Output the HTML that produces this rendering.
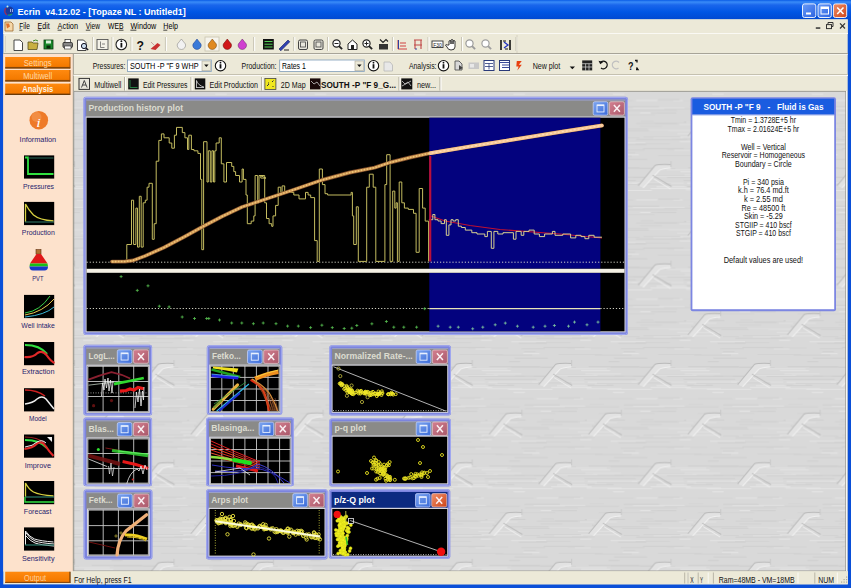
<!DOCTYPE html><html><head><meta charset="utf-8"><style>html,body{margin:0;padding:0;width:851px;height:588px;overflow:hidden;background:#0a4fd8}svg{display:block;font-family:"Liberation Sans",sans-serif}</style></head><body><svg width="851" height="588" viewBox="0 0 851 588"><rect x="0" y="0" width="851" height="588" fill="#0a4fd8"/>
<defs><linearGradient id="tg" x1="0" y1="0" x2="0" y2="1"><stop offset="0" stop-color="#0a5ce6"/><stop offset="0.1" stop-color="#3a8cf8"/><stop offset="0.25" stop-color="#1a66ec"/><stop offset="0.6" stop-color="#0056e4"/><stop offset="1" stop-color="#0148d0"/></linearGradient><linearGradient id="btn" x1="0" y1="0" x2="1" y2="1"><stop offset="0" stop-color="#6a9cf8"/><stop offset="1" stop-color="#2b62e0"/></linearGradient><linearGradient id="cls" x1="0" y1="0" x2="1" y2="1"><stop offset="0" stop-color="#f0906a"/><stop offset="1" stop-color="#cc4418"/></linearGradient><linearGradient id="sb" x1="0" y1="0" x2="1" y2="1"><stop offset="0" stop-color="#7ea6f0"/><stop offset="1" stop-color="#3a6ad8"/></linearGradient><linearGradient id="sc" x1="0" y1="0" x2="1" y2="1"><stop offset="0" stop-color="#d48090"/><stop offset="1" stop-color="#a8586a"/></linearGradient><linearGradient id="ob" x1="0" y1="0" x2="0" y2="1"><stop offset="0" stop-color="#ff8a10"/><stop offset="0.8" stop-color="#f47a00"/><stop offset="1" stop-color="#c05c00"/></linearGradient><pattern id="bg" patternUnits="userSpaceOnUse" x="41.2" y="62.8" width="99.4" height="99.4"><rect width="99.4" height="99.4" fill="#d9d9d9"/><path d="M2.5,63.6h21.8" stroke="#d2d2d2" stroke-width="0.9"/><path d="M10.2,13.9h45.0" stroke="#cecece" stroke-width="0.9"/><path d="M3.2,58.7h12.7" stroke="#d2d2d2" stroke-width="0.9"/><path d="M2.6,50.2h17.9" stroke="#e6e6e6" stroke-width="0.9"/><path d="M58.6,21.9h48.5" stroke="#cecece" stroke-width="0.9"/><path d="M-40.8,21.9h48.5" stroke="#cecece" stroke-width="0.9"/><path d="M15.9,75.4h29.1" stroke="#e2e2e2" stroke-width="0.9"/><path d="M95.1,15.5h24.8" stroke="#cecece" stroke-width="0.9"/><path d="M-4.3,15.5h24.8" stroke="#cecece" stroke-width="0.9"/><path d="M35.7,37.8h25.2" stroke="#e2e2e2" stroke-width="0.9"/><path d="M72.5,80.2h34.8" stroke="#e6e6e6" stroke-width="0.9"/><path d="M-26.9,80.2h34.8" stroke="#e6e6e6" stroke-width="0.9"/><path d="M29.1,7.8h39.4" stroke="#e2e2e2" stroke-width="0.9"/><path d="M70.0,57.4h10.3" stroke="#d2d2d2" stroke-width="0.9"/><path d="M97.9,76.8h50.8" stroke="#cecece" stroke-width="0.9"/><path d="M-1.5,76.8h50.8" stroke="#cecece" stroke-width="0.9"/><path d="M45.1,37.8h49.7" stroke="#d2d2d2" stroke-width="0.9"/><path d="M20.8,36.8h21.3" stroke="#cecece" stroke-width="0.9"/><path d="M17.0,60.5h44.5" stroke="#d2d2d2" stroke-width="0.9"/><path d="M26.8,45.9h54.3" stroke="#d2d2d2" stroke-width="0.9"/><path d="M83.8,68.1h46.8" stroke="#d2d2d2" stroke-width="0.9"/><path d="M-15.6,68.1h46.8" stroke="#d2d2d2" stroke-width="0.9"/><path d="M80.0,81.7h28.1" stroke="#cecece" stroke-width="0.9"/><path d="M-19.4,81.7h28.1" stroke="#cecece" stroke-width="0.9"/><path d="M93.7,21.0h51.8" stroke="#e2e2e2" stroke-width="0.9"/><path d="M-5.7,21.0h51.8" stroke="#e2e2e2" stroke-width="0.9"/><path d="M49.6,21.1h52.2" stroke="#e6e6e6" stroke-width="0.9"/><path d="M-49.8,21.1h52.2" stroke="#e6e6e6" stroke-width="0.9"/><path d="M13.9,14.2h45.2" stroke="#e2e2e2" stroke-width="0.9"/><path d="M42.6,74.3h37.2" stroke="#e2e2e2" stroke-width="0.9"/><path d="M99.2,21.8h33.5" stroke="#cecece" stroke-width="0.9"/><path d="M-0.2,21.8h33.5" stroke="#cecece" stroke-width="0.9"/><path d="M85.6,75.1h15.6" stroke="#d2d2d2" stroke-width="0.9"/><path d="M-13.8,75.1h15.6" stroke="#d2d2d2" stroke-width="0.9"/><path d="M42.0,78.7h11.2" stroke="#e6e6e6" stroke-width="0.9"/><path d="M46.5,59.2h20.6" stroke="#cecece" stroke-width="0.9"/><path d="M11.4,67.6h52.2" stroke="#e2e2e2" stroke-width="0.9"/><path d="M33.8,76.4h22.7" stroke="#d2d2d2" stroke-width="0.9"/><path d="M94.8,45.1h51.8" stroke="#e2e2e2" stroke-width="0.9"/><path d="M-4.6,45.1h51.8" stroke="#e2e2e2" stroke-width="0.9"/><path d="M75.7,96.6h33.4" stroke="#cecece" stroke-width="0.9"/><path d="M-23.7,96.6h33.4" stroke="#cecece" stroke-width="0.9"/><path d="M29.7,86.5h39.9" stroke="#d2d2d2" stroke-width="0.9"/><path d="M75.8,15.2h35.0" stroke="#cecece" stroke-width="0.9"/><path d="M-23.6,15.2h35.0" stroke="#cecece" stroke-width="0.9"/><path d="M48.6,59.5h13.6" stroke="#e2e2e2" stroke-width="0.9"/><path d="M82.7,87.3h23.4" stroke="#cecece" stroke-width="0.9"/><path d="M-16.7,87.3h23.4" stroke="#cecece" stroke-width="0.9"/><path d="M56.4,23.9h11.9" stroke="#e6e6e6" stroke-width="0.9"/><path d="M97.2,81.1h34.6" stroke="#d2d2d2" stroke-width="0.9"/><path d="M-2.2,81.1h34.6" stroke="#d2d2d2" stroke-width="0.9"/><path d="M47.2,12.8h35.5" stroke="#e2e2e2" stroke-width="0.9"/><path d="M60.3,52.5h56.2" stroke="#d2d2d2" stroke-width="0.9"/><path d="M-39.1,52.5h56.2" stroke="#d2d2d2" stroke-width="0.9"/><path d="M39.7,70.9h41.6" stroke="#e2e2e2" stroke-width="0.9"/><path d="M51.4,43.5h14.1" stroke="#d2d2d2" stroke-width="0.9"/><path d="M2.1,6.4h35.7" stroke="#d2d2d2" stroke-width="0.9"/><path d="M70.4,0.7h10.9" stroke="#cecece" stroke-width="0.9"/><path d="M85.4,90.0h11.5" stroke="#d2d2d2" stroke-width="0.9"/><path d="M48.3,27.7h35.0" stroke="#e6e6e6" stroke-width="0.9"/><path d="M47.0,24.2h28.4" stroke="#cecece" stroke-width="0.9"/><path d="M42.8,9.6h29.2" stroke="#e6e6e6" stroke-width="0.9"/><path d="M5.4,85.9h40.7" stroke="#cecece" stroke-width="0.9"/><path d="M72.4,6.0h48.0" stroke="#cecece" stroke-width="0.9"/><path d="M-27.0,6.0h48.0" stroke="#cecece" stroke-width="0.9"/><path d="M18.9,24.7h30.4" stroke="#e6e6e6" stroke-width="0.9"/><path d="M46.0,18.2h51.7" stroke="#cecece" stroke-width="0.9"/><path d="M85.6,44.0h35.5" stroke="#cecece" stroke-width="0.9"/><path d="M-13.8,44.0h35.5" stroke="#cecece" stroke-width="0.9"/><path d="M53.7,64.8h8.7" stroke="#cecece" stroke-width="0.9"/><path d="M84.4,92.1h16.3" stroke="#e6e6e6" stroke-width="0.9"/><path d="M-15.0,92.1h16.3" stroke="#e6e6e6" stroke-width="0.9"/><path d="M85.9,47.8h53.1" stroke="#d2d2d2" stroke-width="0.9"/><path d="M-13.5,47.8h53.1" stroke="#d2d2d2" stroke-width="0.9"/><path d="M97.9,37.7h21.3" stroke="#e6e6e6" stroke-width="0.9"/><path d="M-1.5,37.7h21.3" stroke="#e6e6e6" stroke-width="0.9"/><path d="M69.2,28.4h44.5" stroke="#e6e6e6" stroke-width="0.9"/><path d="M-30.2,28.4h44.5" stroke="#e6e6e6" stroke-width="0.9"/><path d="M29.5,15.4h56.4" stroke="#cecece" stroke-width="0.9"/><path d="M5.7,74.3h37.2" stroke="#d2d2d2" stroke-width="0.9"/><path d="M50.5,5.7h50.6" stroke="#cecece" stroke-width="0.9"/><path d="M-48.9,5.7h50.6" stroke="#cecece" stroke-width="0.9"/><path d="M67.1,59.1h19.8" stroke="#cecece" stroke-width="0.9"/><path d="M56.6,93.6h36.9" stroke="#cecece" stroke-width="0.9"/><path d="M41.7,61.6h37.2" stroke="#e2e2e2" stroke-width="0.9"/><path d="M20.3,92.9h43.8" stroke="#d2d2d2" stroke-width="0.9"/><path d="M13.0,26.4h40.3" stroke="#e6e6e6" stroke-width="0.9"/><path d="M74.7,31.4h11.6" stroke="#e6e6e6" stroke-width="0.9"/><path d="M56.0,61.7h13.0" stroke="#d2d2d2" stroke-width="0.9"/><path d="M13.2,50.3h25.5" stroke="#cecece" stroke-width="0.9"/><path d="M36.7,87.4h15.9" stroke="#e2e2e2" stroke-width="0.9"/><path d="M98.1,60.8h40.7" stroke="#cecece" stroke-width="0.9"/><path d="M-1.3,60.8h40.7" stroke="#cecece" stroke-width="0.9"/><path d="M55.1,66.4h54.6" stroke="#cecece" stroke-width="0.9"/><path d="M-44.3,66.4h54.6" stroke="#cecece" stroke-width="0.9"/><g transform="translate(0,0)"><path d="M0.7,23.6 L17.6,3.2 Q22,2 33.1,2.5 L33.1,6 Q25,6.5 21.9,8.1 L5.6,25.7z" fill="#e2e2e2"/><path d="M0.7,23.6 L17.6,3.2 Q22,2 33.1,2.5" stroke="#b9b9b9" fill="none" stroke-width="1"/><path d="M5.6,25.7 L21.9,8.1 Q25,6.5 33.1,6" stroke="#f2f2f2" fill="none" stroke-width="1"/><path d="M15,13 L34,24.3" stroke="#bdbdbd" fill="none" stroke-width="1"/><path d="M16,16.5 L33,27" stroke="#efefef" fill="none" stroke-width="1"/><path d="M33.5,-1 v6" stroke="#c4c4c4" stroke-width="0.9"/></g><g transform="translate(49.7,49.7)"><path d="M0.7,23.6 L17.6,3.2 Q22,2 33.1,2.5 L33.1,6 Q25,6.5 21.9,8.1 L5.6,25.7z" fill="#e2e2e2"/><path d="M0.7,23.6 L17.6,3.2 Q22,2 33.1,2.5" stroke="#b9b9b9" fill="none" stroke-width="1"/><path d="M5.6,25.7 L21.9,8.1 Q25,6.5 33.1,6" stroke="#f2f2f2" fill="none" stroke-width="1"/><path d="M15,13 L34,24.3" stroke="#bdbdbd" fill="none" stroke-width="1"/><path d="M16,16.5 L33,27" stroke="#efefef" fill="none" stroke-width="1"/><path d="M33.5,-1 v6" stroke="#c4c4c4" stroke-width="0.9"/></g><g transform="translate(-49.7,49.7)"><path d="M0.7,23.6 L17.6,3.2 Q22,2 33.1,2.5 L33.1,6 Q25,6.5 21.9,8.1 L5.6,25.7z" fill="#e2e2e2"/><path d="M0.7,23.6 L17.6,3.2 Q22,2 33.1,2.5" stroke="#b9b9b9" fill="none" stroke-width="1"/><path d="M5.6,25.7 L21.9,8.1 Q25,6.5 33.1,6" stroke="#f2f2f2" fill="none" stroke-width="1"/><path d="M15,13 L34,24.3" stroke="#bdbdbd" fill="none" stroke-width="1"/><path d="M16,16.5 L33,27" stroke="#efefef" fill="none" stroke-width="1"/><path d="M33.5,-1 v6" stroke="#c4c4c4" stroke-width="0.9"/></g><g transform="translate(0,99.4)"><path d="M0.7,23.6 L17.6,3.2 Q22,2 33.1,2.5 L33.1,6 Q25,6.5 21.9,8.1 L5.6,25.7z" fill="#e2e2e2"/><path d="M0.7,23.6 L17.6,3.2 Q22,2 33.1,2.5" stroke="#b9b9b9" fill="none" stroke-width="1"/><path d="M5.6,25.7 L21.9,8.1 Q25,6.5 33.1,6" stroke="#f2f2f2" fill="none" stroke-width="1"/><path d="M15,13 L34,24.3" stroke="#bdbdbd" fill="none" stroke-width="1"/><path d="M16,16.5 L33,27" stroke="#efefef" fill="none" stroke-width="1"/><path d="M33.5,-1 v6" stroke="#c4c4c4" stroke-width="0.9"/></g></pattern></defs>
<rect x="0" y="0" width="851" height="20" fill="url(#tg)"/>
<path d="M0,0 h851 v20 h-851z" stroke="none" fill="url(#tg)" stroke-width="1"/>
<circle cx="9.5" cy="10.8" r="4.2" fill="#1a3a9a"/><path d="M6,8 a4.5,4.5 0 0 0 1,7" stroke="#a02a50" fill="none" stroke-width="1.3"/><path d="M8,15 a4.5,4.5 0 0 0 4,-1" stroke="#20a060" fill="none" stroke-width="1.2"/><circle cx="7.5" cy="6.5" r="1" fill="#c0f0e0"/><path d="M10.5,9 v3 M12.5,9 v3" stroke="#b8c8ff" stroke-width="0.8"/>
<text x="17.6" y="14.6" font-size="9.2" fill="#fff" font-weight="bold" textLength="168.1" lengthAdjust="spacingAndGlyphs" xml:space="preserve">Ecrin  v4.12.02 - [Topaze NL : Untitled1]</text>
<rect x="802.5" y="3.9" width="13.3" height="13.6" rx="2" fill="url(#btn)" stroke="#fff" stroke-width="0.9"/>
<rect x="818" y="3.9" width="13.3" height="13.6" rx="2" fill="url(#btn)" stroke="#fff" stroke-width="0.9"/>
<rect x="833.4" y="3.9" width="13.3" height="13.6" rx="2" fill="url(#cls)" stroke="#fff" stroke-width="0.9"/>
<rect x="806" y="12.5" width="5" height="2" fill="#fff"/>
<rect x="821" y="7" width="7.5" height="7" fill="none" stroke="#fff" stroke-width="1"/>
<rect x="821" y="7" width="7.5" height="2" fill="#fff"/>
<path d="M837.2,7.5 L843.5,14 M843.5,7.5 L837.2,14" stroke="#fff" fill="none" stroke-width="1.6"/>
<rect x="3.3" y="19.4" width="844.4" height="565" fill="#ece9d8"/>
<rect x="3.3" y="19.4" width="844.4" height="14" fill="#ece9d8"/>
<line x1="3.3" y1="33.5" x2="848" y2="33.5" stroke="#faf9f4" stroke-width="1"/>
<path d="M5,22 h6 l2,2 v7 h-8z" fill="#f5d8a8" stroke="#a06a30" stroke-width="0.8"/><path d="M6,23.5 l3,0 l1,3 l-3,2z" fill="#e0702a"/>
<text x="19.3" y="28.8" font-size="9" fill="#000" textLength="10.5" lengthAdjust="spacingAndGlyphs">File</text>
<text x="37.6" y="28.8" font-size="9" fill="#000" textLength="12.199999999999996" lengthAdjust="spacingAndGlyphs">Edit</text>
<text x="57.6" y="28.8" font-size="9" fill="#000" textLength="20.4" lengthAdjust="spacingAndGlyphs">Action</text>
<text x="85.8" y="28.8" font-size="9" fill="#000" textLength="14.100000000000009" lengthAdjust="spacingAndGlyphs">View</text>
<text x="108" y="28.8" font-size="9" fill="#000" textLength="15.400000000000006" lengthAdjust="spacingAndGlyphs">WEB</text>
<text x="130.4" y="28.8" font-size="9" fill="#000" textLength="25.900000000000006" lengthAdjust="spacingAndGlyphs">Window</text>
<text x="163.3" y="28.8" font-size="9" fill="#000" textLength="14.699999999999989" lengthAdjust="spacingAndGlyphs">Help</text>
<line x1="19.3" y1="30.2" x2="22.3" y2="30.2" stroke="#000" stroke-width="0.7"/>
<line x1="37.6" y1="30.2" x2="41.1" y2="30.2" stroke="#000" stroke-width="0.7"/>
<line x1="57.6" y1="30.2" x2="61.6" y2="30.2" stroke="#000" stroke-width="0.7"/>
<line x1="85.8" y1="30.2" x2="90.3" y2="30.2" stroke="#000" stroke-width="0.7"/>
<line x1="119" y1="30.2" x2="123.5" y2="30.2" stroke="#000" stroke-width="0.7"/>
<line x1="130.4" y1="30.2" x2="136.4" y2="30.2" stroke="#000" stroke-width="0.7"/>
<line x1="163.3" y1="30.2" x2="167.3" y2="30.2" stroke="#000" stroke-width="0.7"/>
<rect x="815.8" y="27.3" width="4.5" height="1.5" fill="#333"/>
<rect x="826.5" y="24.6" width="5" height="4" fill="none" stroke="#333" stroke-width="1"/><path d="M828,24 v-1.5 h5 v4 h-1" fill="none" stroke="#333" stroke-width="1"/>
<path d="M840,23.3 L845,28.5 M845,23.3 L840,28.5" stroke="#333" fill="none" stroke-width="1.2"/>
<line x1="3.3" y1="53.5" x2="848" y2="53.5" stroke="#a9a697" stroke-width="1"/>
<line x1="4" y1="54.5" x2="848" y2="54.5" stroke="#fefefe" stroke-width="0.5"/>
<line x1="5.5" y1="36" x2="5.5" y2="52" stroke="#d8d4c4" stroke-width="1"/>
<line x1="92.7" y1="37" x2="92.7" y2="51" stroke="#c5c2b2" stroke-width="1"/>
<line x1="93.7" y1="37" x2="93.7" y2="51" stroke="#fff" stroke-width="1"/>
<line x1="112" y1="37" x2="112" y2="51" stroke="#c5c2b2" stroke-width="1"/>
<line x1="113" y1="37" x2="113" y2="51" stroke="#fff" stroke-width="1"/>
<line x1="131" y1="37" x2="131" y2="51" stroke="#c5c2b2" stroke-width="1"/>
<line x1="132" y1="37" x2="132" y2="51" stroke="#fff" stroke-width="1"/>
<line x1="165.4" y1="37" x2="165.4" y2="51" stroke="#c5c2b2" stroke-width="1"/>
<line x1="166.4" y1="37" x2="166.4" y2="51" stroke="#fff" stroke-width="1"/>
<line x1="253.7" y1="37" x2="253.7" y2="51" stroke="#c5c2b2" stroke-width="1"/>
<line x1="254.7" y1="37" x2="254.7" y2="51" stroke="#fff" stroke-width="1"/>
<line x1="293.8" y1="37" x2="293.8" y2="51" stroke="#c5c2b2" stroke-width="1"/>
<line x1="294.8" y1="37" x2="294.8" y2="51" stroke="#fff" stroke-width="1"/>
<line x1="327.6" y1="37" x2="327.6" y2="51" stroke="#c5c2b2" stroke-width="1"/>
<line x1="328.6" y1="37" x2="328.6" y2="51" stroke="#fff" stroke-width="1"/>
<line x1="392.4" y1="37" x2="392.4" y2="51" stroke="#c5c2b2" stroke-width="1"/>
<line x1="393.4" y1="37" x2="393.4" y2="51" stroke="#fff" stroke-width="1"/>
<line x1="428" y1="37" x2="428" y2="51" stroke="#c5c2b2" stroke-width="1"/>
<line x1="429" y1="37" x2="429" y2="51" stroke="#fff" stroke-width="1"/>
<line x1="461.6" y1="37" x2="461.6" y2="51" stroke="#c5c2b2" stroke-width="1"/>
<line x1="462.6" y1="37" x2="462.6" y2="51" stroke="#fff" stroke-width="1"/>
<line x1="516" y1="37" x2="516" y2="51" stroke="#c5c2b2" stroke-width="1"/>
<line x1="517" y1="37" x2="517" y2="51" stroke="#fff" stroke-width="1"/>
<rect x="516.5" y="35" width="1" height="18" fill="#d6d2c0"/>
<path d="M14,40 h6 l2.5,2.5 v8 h-8.5z" fill="#fff" stroke="#333" stroke-width="0.9"/>
<path d="M28,42 h4 l1,1 h5 l-1,6.5 h-9z" fill="#c8b040" stroke="#5a5020" stroke-width="0.8"/><path d="M33,41 q3,-2 5,0" stroke="#3a8a20" fill="none"/>
<rect x="44" y="40" width="9" height="9" fill="#1a8a2a" stroke="#0a3a10" stroke-width="0.8"/><rect x="46" y="40.5" width="5" height="3" fill="#d8f0d8"/><rect x="46.5" y="45.5" width="4" height="3" fill="#0a2a0a"/>
<rect x="63" y="42.5" width="9.4" height="5" rx="1" fill="#888" stroke="#222" stroke-width="0.9"/><rect x="65" y="39.5" width="5.5" height="3" fill="#fff" stroke="#222" stroke-width="0.7"/><rect x="64.5" y="46" width="6.5" height="3" fill="#fff" stroke="#222" stroke-width="0.6"/>
<path d="M77.5,40 h6 l2.5,2.5 v8 h-8.5z" fill="#fff" stroke="#333" stroke-width="0.9"/>
<circle cx="84" cy="46" r="2.6" fill="#cde" stroke="#112" stroke-width="1"/><path d="M86,48 l2.2,2" stroke="#112" stroke-width="1.4"/>
<rect x="97" y="39.5" width="11" height="10" fill="#f4f2e8" stroke="#555" stroke-width="0.9"/><path d="M100.5,41.5 v6 h4 M102,44 h3" stroke="#555" fill="none" stroke-width="0.7"/>
<circle cx="121.3" cy="44.5" r="5.3" fill="#fff" stroke="#222" stroke-width="1.1"/><rect x="120.5" y="43" width="1.8" height="4.5" fill="#111"/><circle cx="121.4" cy="41.3" r="1" fill="#111"/>
<text x="136.5" y="49.5" font-size="12" fill="#111" font-weight="bold" textLength="7.5" lengthAdjust="spacingAndGlyphs">?</text>
<path d="M150.5,49 l7,-6 l3,2 l-5,5z" fill="#c83030"/><path d="M151,42 l4,4" stroke="#c8a0a0"/>
<path d="M181.4,39.0 q1.5,2 4,5 a4.2,4.2 0 1 1 -8,0 q2.5,-3 4,-5z" fill="#f2f2f2" stroke="#777" stroke-width="0.5"/>
<path d="M197,39.0 q1.5,2 4,5 a4.2,4.2 0 1 1 -8,0 q2.5,-3 4,-5z" fill="#3a7ad8" stroke="#1a3a88" stroke-width="0.5"/>
<rect x="205" y="37" width="14" height="14" fill="#f6f4ec"/>
<rect x="205" y="37" width="14" height="14" fill="none" stroke="#c8c4b0" stroke-width="0.8"/>
<path d="M212.3,39.0 q1.5,2 4,5 a4.2,4.2 0 1 1 -8,0 q2.5,-3 4,-5z" fill="#e08a20" stroke="#6a3a00" stroke-width="0.5"/>
<path d="M227.3,39.0 q1.5,2 4,5 a4.2,4.2 0 1 1 -8,0 q2.5,-3 4,-5z" fill="#d01818" stroke="#600" stroke-width="0.5"/>
<path d="M242.3,39.0 q1.5,2 4,5 a4.2,4.2 0 1 1 -8,0 q2.5,-3 4,-5z" fill="#d040d0" stroke="#602060" stroke-width="0.5"/>
<rect x="263" y="39" width="10.8" height="10.5" fill="#111"/><path d="M264.5,41.5h8M264.5,44.2h8M264.5,47h8" stroke="#5c5" stroke-width="1"/>
<path d="M279,49 l9,-9 l1.8,1.8 l-9,9z" fill="#3040b0" stroke="#102060" stroke-width="0.6"/><path d="M284,50 h5" stroke="#222"/>
<rect x="298.5" y="40" width="9" height="9.5" rx="1.5" fill="#e8e6dc" stroke="#444" stroke-width="1"/><rect x="300.5" y="42" width="5" height="5" fill="none" stroke="#444" stroke-width="0.8"/>
<rect x="314" y="40" width="9" height="9.5" rx="1.5" fill="#e8e6dc" stroke="#444" stroke-width="1"/><rect x="316" y="42" width="5" height="5" fill="none" stroke="#444" stroke-width="0.8"/>
<circle cx="336.5" cy="43.5" r="3.6" fill="#fff" stroke="#222" stroke-width="1.2"/><path d="M339.1,46.1 l3,3" stroke="#222" stroke-width="1.8"/>
<line x1="334.5" y1="43.5" x2="338.5" y2="43.5" stroke="#222" stroke-width="1"/>
<path d="M348,44 l4.5,-4 l4.5,4 v5.5 h-9z" fill="#fff" stroke="#222" stroke-width="1"/><rect x="351" y="45" width="3" height="4" fill="#222"/>
<circle cx="366.5" cy="43.5" r="3.6" fill="#fff" stroke="#222" stroke-width="1.2"/><path d="M369.1,46.1 l3,3" stroke="#222" stroke-width="1.8"/>
<line x1="364.5" y1="43.5" x2="368.5" y2="43.5" stroke="#222" stroke-width="1"/>
<line x1="366.5" y1="41.5" x2="366.5" y2="45.5" stroke="#222" stroke-width="1"/>
<path d="M379,44 h9 v5.5 h-9z" fill="#333"/><path d="M380,39.5 l3,3 l3,-3 l2,2" stroke="#222" fill="none" stroke-width="1.1"/>
<path d="M398,40 v9 h9 M400,46 h6 M400,43 h6" stroke="#d04040" fill="none" stroke-width="1"/><path d="M398.5,49 v-9" stroke="#3040a0" stroke-width="1"/>
<path d="M414,40 h8 M415,40 v9 M421,40 v9 M414,45 h8" stroke="#c04848" fill="none" stroke-width="1.1"/><path d="M415,49 h2" stroke="#3040a0"/>
<rect x="432" y="41" width="11" height="6.5" fill="#fff" stroke="#333" stroke-width="0.9"/>
<text x="433.2" y="46.6" font-size="5" fill="#222" textLength="8.5" lengthAdjust="spacingAndGlyphs">F30</text>
<path d="M449,45 v-4 q1,-1 2,0 v3 v-4 q1,-1 2,0 v4 v-3 q1,-1 2,0 v6 q0,3 -4,3 q-3,0 -4,-3 l-1.5,-2 q1,-1 2,0z" fill="#fff" stroke="#222" stroke-width="0.9"/>
<circle cx="469.5" cy="43.5" r="3.6" fill="#fff" stroke="#9a9a9a" stroke-width="1.2"/><path d="M472.1,46.1 l3,3" stroke="#9a9a9a" stroke-width="1.8"/>
<circle cx="485.5" cy="43.5" r="3.6" fill="#fff" stroke="#a0a0a0" stroke-width="1.2"/><path d="M488.1,46.1 l3,3" stroke="#a0a0a0" stroke-width="1.8"/>
<path d="M501,40 v10 M510,40 v10" stroke="#111" stroke-width="1.6"/><path d="M504,42 l4,3 l-4,3" stroke="#2030c0" fill="none" stroke-width="1.3"/><path d="M503,41h3M505,49h3" stroke="#111"/>
<rect x="3.3" y="54" width="69.9" height="517.5" fill="#fde2cc"/>
<line x1="73.3" y1="54" x2="73.3" y2="571" stroke="#9d9a8c" stroke-width="1"/>
<rect x="5.2" y="57" width="65" height="11.400000000000006" fill="url(#ob)"/>
<line x1="5.2" y1="67.9" x2="70.2" y2="67.9" stroke="#6a3a08" stroke-width="1.2"/>
<line x1="70" y1="57" x2="70" y2="68.4" stroke="#8a4a10" stroke-width="0.8"/>
<text x="23.700000000000003" y="65.6" font-size="8.4" fill="#ffd9a6" textLength="28" lengthAdjust="spacingAndGlyphs">Settings</text>
<rect x="5.2" y="70" width="65" height="11.400000000000006" fill="url(#ob)"/>
<line x1="5.2" y1="80.9" x2="70.2" y2="80.9" stroke="#6a3a08" stroke-width="1.2"/>
<line x1="70" y1="70" x2="70" y2="81.4" stroke="#8a4a10" stroke-width="0.8"/>
<text x="23.200000000000003" y="78.6" font-size="8.4" fill="#ffd9a6" textLength="29" lengthAdjust="spacingAndGlyphs">Multiwell</text>
<rect x="5.2" y="83.6" width="65" height="11.200000000000003" fill="url(#ob)"/>
<line x1="5.2" y1="94.3" x2="70.2" y2="94.3" stroke="#6a3a08" stroke-width="1.2"/>
<line x1="70" y1="83.6" x2="70" y2="94.8" stroke="#8a4a10" stroke-width="0.8"/>
<text x="22.200000000000003" y="92.19999999999999" font-size="8.4" fill="#fff4e6" font-weight="bold" textLength="31" lengthAdjust="spacingAndGlyphs">Analysis</text>
<text x="19.6" y="142.3" font-size="7.8" fill="#26226e" textLength="36.6" lengthAdjust="spacingAndGlyphs">Information</text>
<text x="23" y="189" font-size="7.8" fill="#26226e" textLength="31" lengthAdjust="spacingAndGlyphs">Pressures</text>
<text x="21.8" y="235.1" font-size="7.8" fill="#26226e" textLength="33.0" lengthAdjust="spacingAndGlyphs">Production</text>
<text x="32.3" y="281" font-size="7.8" fill="#26226e" textLength="11.100000000000001" lengthAdjust="spacingAndGlyphs">PVT</text>
<text x="21.3" y="327.5" font-size="7.8" fill="#26226e" textLength="33.5" lengthAdjust="spacingAndGlyphs">Well intake</text>
<text x="22" y="374.4" font-size="7.8" fill="#26226e" textLength="32.5" lengthAdjust="spacingAndGlyphs">Extraction</text>
<text x="29" y="421.2" font-size="7.8" fill="#26226e" textLength="17.799999999999997" lengthAdjust="spacingAndGlyphs">Model</text>
<text x="24.7" y="467.7" font-size="7.8" fill="#26226e" textLength="26.3" lengthAdjust="spacingAndGlyphs">Improve</text>
<text x="23.8" y="513.8" font-size="7.8" fill="#26226e" textLength="27.599999999999998" lengthAdjust="spacingAndGlyphs">Forecast</text>
<text x="22" y="561" font-size="7.8" fill="#26226e" textLength="32.5" lengthAdjust="spacingAndGlyphs">Sensitivity</text>
<circle cx="38.8" cy="120.2" r="9.3" fill="#ee7a28"/><circle cx="36.5" cy="117" r="5" fill="#f5a060" opacity="0.5"/>
<text x="36.2" y="126.5" font-size="13" fill="#fff" textLength="4.5" lengthAdjust="spacingAndGlyphs" font-style="italic" font-family="Liberation Serif">i</text>
<rect x="24" y="155.4" width="30.2" height="23.2" fill="#000"/>
<path d="M25,157.5 h3 v16.5 h25.5" stroke="#30e040" fill="none" stroke-width="1.8"/><path d="M28,158 h25.5" stroke="#2a6a5a" stroke-width="1"/>
<rect x="24" y="201.9" width="30.2" height="23.2" fill="#000"/>
<path d="M25.5,222 v-18 q3,6 8,11 q6,5 20,6" stroke="#d8d040" fill="none" stroke-width="1.3"/><path d="M25,222 h29" stroke="#2a6a5a" stroke-width="1.2"/>
<rect x="36" y="249.6" width="5" height="4.5" fill="#b07030" stroke="#603010" stroke-width="0.6"/><path d="M36.5,254 L30,263.5 L47.5,263.5 L41,254z" fill="#e01818"/><path d="M30,263.5 L29.5,266.5 L48,266.5 L47.5,263.5z" fill="#18c018"/><path d="M29.5,266.5 Q29.5,270.5 33,270.5 L44.5,270.5 Q48,270.5 48,266.5z" fill="#1838c8"/>
<rect x="24" y="294.9" width="30.2" height="23.2" fill="#000"/>
<path d="M25,313 q15,-2 25,-17" stroke="#38d048" fill="none" stroke-width="1"/><path d="M25,315 q18,-3 29,-16" stroke="#e8c850" fill="none" stroke-width="1"/><path d="M25,317 q20,-2 29,-10" stroke="#3ab8d8" fill="none" stroke-width="1"/>
<rect x="24" y="342" width="30.2" height="23.2" fill="#000"/>
<path d="M25,345 q15,0 22,9" stroke="#30e040" fill="none" stroke-width="2.2"/><path d="M24.5,357 q8,1 13,-4 q5,-3 9,2 q4,6 8,8" stroke="#e02828" fill="none" stroke-width="2.2"/>
<rect x="24" y="388.2" width="30.2" height="23.2" fill="#000"/>
<path d="M25,390 q12,0 20,6" stroke="#d02020" fill="none" stroke-width="1.5"/><path d="M25,404 q8,-1 12,-5 q5,-4 9,0 q4,5 8,10" stroke="#eee" fill="none" stroke-width="1.5"/>
<rect x="24" y="434.5" width="30.2" height="23.2" fill="#000"/>
<path d="M25,437 q12,0 20,6" stroke="#a02020" fill="none" stroke-width="1.2"/><path d="M25,440 q15,0 22,8" stroke="#30e040" fill="none" stroke-width="2"/><path d="M24.5,449 q8,-1 12,-5 q5,-4 9,2 q4,6 8,10" stroke="#e02828" fill="none" stroke-width="2.2"/><path d="M25,447 q8,-1 12,-5 q5,-3 9,1" stroke="#eee" fill="none" stroke-width="1"/><path d="M47,437 l5,0 l0,5z" fill="#f0f0f0"/>
<rect x="24" y="481" width="30.2" height="23.2" fill="#000"/>
<path d="M25.5,497 v-14 q3,6 8,9 q6,3 20,4" stroke="#d8d040" fill="none" stroke-width="1.3"/><path d="M25,497 h29" stroke="#2a7a6a" stroke-width="1.2"/><path d="M25,497 v5 h29" stroke="#30e040" fill="none" stroke-width="1.3"/>
<rect x="24" y="527.4" width="30.2" height="23.2" fill="#000"/>
<path d="M25.5,545 v-14 q4,6 9,8 q6,2 19,3" stroke="#eee" fill="none" stroke-width="1"/><path d="M26,533 q4,6 9,8 q6,2 19,3" stroke="#eee" fill="none" stroke-width="1"/><path d="M26,536 q4,5 9,7 q6,2 19,3" stroke="#eee" fill="none" stroke-width="1"/><path d="M25,545 h29" stroke="#2a7a6a" stroke-width="1.2"/>
<rect x="5.2" y="571.7" width="65" height="11.3" fill="url(#ob)"/>
<line x1="70" y1="571.7" x2="70" y2="583" stroke="#6a3a08" stroke-width="1.2"/>
<line x1="5.2" y1="582.5" x2="70.2" y2="582.5" stroke="#8a4a10" stroke-width="1"/>
<text x="24" y="580.5" font-size="8.4" fill="#ffd09a" textLength="22" lengthAdjust="spacingAndGlyphs">Output</text>
<line x1="73.5" y1="53.5" x2="848" y2="53.5" stroke="#a7a498" stroke-width="1.2"/>
<line x1="73.5" y1="74.5" x2="848" y2="74.5" stroke="#c5c1b0" stroke-width="1"/>
<line x1="73.5" y1="75.5" x2="848" y2="75.5" stroke="#fbfaf6" stroke-width="1"/>
<text x="92.8" y="69" font-size="8.6" fill="#111" textLength="32.6" lengthAdjust="spacingAndGlyphs">Pressures:</text>
<rect x="127.5" y="60" width="83.80000000000001" height="11.5" fill="#fff" stroke="#7f9db9" stroke-width="0.8"/>
<text x="129.9" y="68.8" font-size="8.6" fill="#000" textLength="68.7" lengthAdjust="spacingAndGlyphs">SOUTH -P &quot;F 9 WHP</text>
<rect x="202.0" y="61" width="8.5" height="9.7" fill="#ece9d8" stroke="#aaa79a" stroke-width="0.6"/><path d="M204.10000000000002,64.5 h4.5 l-2.25,2.6z" fill="#111"/>
<circle cx="220.5" cy="65.7" r="5.2" fill="#fff" stroke="#111" stroke-width="1.1"/><rect x="219.6" y="64.2" width="1.8" height="4.3" fill="#111"/><circle cx="220.5" cy="62.7" r="0.9" fill="#111"/>
<text x="241.6" y="69" font-size="8.6" fill="#111" textLength="34.9" lengthAdjust="spacingAndGlyphs">Production:</text>
<rect x="279.7" y="60" width="84.60000000000002" height="11.5" fill="#fff" stroke="#7f9db9" stroke-width="0.8"/>
<text x="282.09999999999997" y="68.8" font-size="8.6" fill="#000" textLength="23.7" lengthAdjust="spacingAndGlyphs">Rates 1</text>
<rect x="355.0" y="61" width="8.5" height="9.7" fill="#ece9d8" stroke="#aaa79a" stroke-width="0.6"/><path d="M357.1,64.5 h4.5 l-2.25,2.6z" fill="#111"/>
<circle cx="373.5" cy="65.7" r="5.2" fill="#fff" stroke="#111" stroke-width="1.1"/><rect x="372.6" y="64.2" width="1.8" height="4.3" fill="#111"/><circle cx="373.5" cy="62.7" r="0.9" fill="#111"/>
<path d="M384,62 h6 l2.5,3 v6 h-8.5z" fill="#e8e8e8" stroke="#b8b8b8" stroke-width="0.8"/>
<text x="408.9" y="69" font-size="8.6" fill="#111" textLength="27.6" lengthAdjust="spacingAndGlyphs">Analysis:</text>
<circle cx="443.5" cy="65.7" r="5.2" fill="#fff" stroke="#111" stroke-width="1.1"/><rect x="442.6" y="64.2" width="1.8" height="4.3" fill="#111"/><circle cx="443.5" cy="62.7" r="0.9" fill="#111"/>
<path d="M455,61 h4 l3,3 v6 h-7z" fill="#d8d8d8" stroke="#555" stroke-width="0.9"/><path d="M459,65 l4,3 l-4,2z" fill="#444"/>
<rect x="468.5" y="62.5" width="10.5" height="6.5" fill="#c8c8c8"/><rect x="470" y="64" width="4" height="3.5" fill="#e8e8e8"/>
<rect x="484" y="60.5" width="10" height="10" fill="#fff" stroke="#2a3a7a" stroke-width="1"/><path d="M485,63.5h8M489,63.5v6M485,66.5h8" stroke="#2a3a7a" stroke-width="0.8"/>
<rect x="499.5" y="60.5" width="10" height="10" fill="#fff" stroke="#2a3a7a" stroke-width="1"/><path d="M500,62.5h9M502,65h7M502,67.5h7" stroke="#3a4a9a" stroke-width="1.1"/>
<path d="M516.8,61 h5 l-3,3.8 h3 l-4.5,5.8 l1.3,-4.2 h-2.3z" fill="#e84010"/>
<text x="532.7" y="69" font-size="8.6" fill="#111" textLength="27.6" lengthAdjust="spacingAndGlyphs">New plot</text>
<path d="M569.7,66.5 h5.3 l-2.65,2.8z" fill="#111"/>
<rect x="582.2" y="60.4" width="10" height="10" fill="#222"/><path d="M582,63.7h10.5M582,67h10.5M585.6,63.7v7M589,63.7v7" stroke="#ddd" stroke-width="0.7"/>
<path d="M600.5,62.5 a3.8,3.8 0 1 1 0.5,5.5" stroke="#111" fill="none" stroke-width="1.3"/><path d="M598.5,60.8 l1.8,3.5 l3,-2.2z" fill="#111"/>
<path d="M619,62.5 a3.8,3.8 0 1 0 -0.5,5.5" stroke="#c0c0c0" fill="none" stroke-width="1.3"/>
<text x="628" y="69.5" font-size="10" fill="#111" font-weight="bold" textLength="5.5" lengthAdjust="spacingAndGlyphs">?</text>
<path d="M635,60.5 l2,0 l0,2 M636.5,67.5 l1.5,2 l-2,0" stroke="#111" fill="none" stroke-width="1.3"/>
<rect x="79" y="78.4" width="10.5" height="11" fill="#e8e6dc" stroke="#333" stroke-width="1"/><path d="M81.5,87.5 l2.8,-7 l2.8,7 M82.6,85 h3.4" stroke="#333" fill="none" stroke-width="0.9"/>
<text x="94.3" y="87.5" font-size="8.4" fill="#111" textLength="27.1" lengthAdjust="spacingAndGlyphs">Multiwell</text>
<line x1="124.6" y1="77" x2="124.6" y2="90.5" stroke="#aca899" stroke-width="1"/>
<line x1="125.6" y1="77" x2="125.6" y2="90.5" stroke="#fff" stroke-width="1"/>
<rect x="128.2" y="78.4" width="10.5" height="11" fill="#111"/><path d="M130,80 v7.5 h7.5" stroke="#2a8a4a" fill="none" stroke-width="0.9"/>
<text x="143" y="87.5" font-size="8.4" fill="#111" textLength="44.4" lengthAdjust="spacingAndGlyphs">Edit Pressures</text>
<line x1="191" y1="77" x2="191" y2="90.5" stroke="#aca899" stroke-width="1"/>
<line x1="192" y1="77" x2="192" y2="90.5" stroke="#fff" stroke-width="1"/>
<rect x="194.8" y="78.4" width="10.5" height="11" fill="#111"/><path d="M196.5,87.5 v-7 q1.5,5 7.5,6.5 M196,87.5 h8" stroke="#ddd" fill="none" stroke-width="0.8"/>
<text x="209.6" y="87.5" font-size="8.4" fill="#111" textLength="48.3" lengthAdjust="spacingAndGlyphs">Edit Production</text>
<line x1="261.7" y1="77" x2="261.7" y2="90.5" stroke="#aca899" stroke-width="1"/>
<line x1="262.7" y1="77" x2="262.7" y2="90.5" stroke="#fff" stroke-width="1"/>
<rect x="264.9" y="78.4" width="11" height="11" fill="#f0e820" stroke="#444" stroke-width="0.8"/><path d="M267,86 l2,-2 M272,82 l1.5,-1.5 M268,83 h1 M272.5,86.5 h1" stroke="#333" stroke-width="1"/>
<text x="280.8" y="87.5" font-size="8.4" fill="#111" textLength="24.9" lengthAdjust="spacingAndGlyphs">2D Map</text>
<rect x="310" y="78.4" width="10.5" height="11" fill="#1a0a0a"/><path d="M311,81 l3,3 l3,-2 l3,4" stroke="#ccc" fill="none" stroke-width="0.8"/>
<text x="321" y="87.5" font-size="8.6" fill="#111" font-weight="bold" textLength="75" lengthAdjust="spacingAndGlyphs">SOUTH -P &quot;F 9_G...</text>
<line x1="399" y1="77" x2="399" y2="90.5" stroke="#aca899" stroke-width="1"/>
<line x1="400" y1="77" x2="400" y2="90.5" stroke="#fff" stroke-width="1"/>
<rect x="401.3" y="78.4" width="11" height="11" fill="#111"/><path d="M402,81 l3,3 l3,-2 l3,4 M402,86 l9,-5" stroke="#ccc" fill="none" stroke-width="0.8"/>
<text x="417" y="87.5" font-size="8.4" fill="#111" textLength="19" lengthAdjust="spacingAndGlyphs">new...</text>
<line x1="440" y1="77" x2="440" y2="90.5" stroke="#aca899" stroke-width="1"/>
<line x1="441" y1="77" x2="441" y2="90.5" stroke="#fff" stroke-width="1"/>
<rect x="73.5" y="91" width="772.5" height="480" fill="url(#bg)"/>
<rect x="73.8" y="91.3" width="772" height="479.7" fill="none" stroke="#8f8d84" stroke-width="0.8"/>
<line x1="846.5" y1="91" x2="846.5" y2="571" stroke="#fff" stroke-width="0.8"/>
<rect x="73.5" y="571.2" width="774.5" height="13" fill="#ece9d8"/>
<text x="73.9" y="582.6" font-size="8.4" fill="#111" textLength="57.8" lengthAdjust="spacingAndGlyphs">For Help, press F1</text>
<line x1="684.7" y1="572.5" x2="684.7" y2="583.5" stroke="#aca899" stroke-width="0.8"/>
<line x1="688" y1="572.5" x2="688" y2="583.5" stroke="#fff" stroke-width="0.8"/>
<line x1="698.2" y1="572.5" x2="698.2" y2="583.5" stroke="#aca899" stroke-width="0.8"/>
<line x1="708.2" y1="572.5" x2="708.2" y2="583.5" stroke="#fff" stroke-width="0.8"/>
<line x1="713.4" y1="572.5" x2="713.4" y2="583.5" stroke="#aca899" stroke-width="0.8"/>
<line x1="798" y1="572.5" x2="798" y2="583.5" stroke="#fff" stroke-width="0.8"/>
<line x1="814.8" y1="572.5" x2="814.8" y2="583.5" stroke="#aca899" stroke-width="0.8"/>
<line x1="837.3" y1="572.5" x2="837.3" y2="583.5" stroke="#fff" stroke-width="0.8"/>
<line x1="688" y1="572.5" x2="688" y2="583.5" stroke="#aca899" stroke-width="0.8"/>
<text x="690.3" y="582.6" font-size="8.4" fill="#222" textLength="3.4" lengthAdjust="spacingAndGlyphs">X</text>
<text x="700" y="582.6" font-size="8.4" fill="#222" textLength="3" lengthAdjust="spacingAndGlyphs">Y</text>
<text x="718.8" y="582.6" font-size="8.4" fill="#111" textLength="75.8" lengthAdjust="spacingAndGlyphs">Ram=48MB - VM=18MB</text>
<text x="818.2" y="582.6" font-size="8.4" fill="#111" textLength="15.8" lengthAdjust="spacingAndGlyphs">NUM</text>
<rect x="846.0" y="581.5" width="1.2" height="1.2" fill="#aca899"/>
<rect x="846.0" y="579.0" width="1.2" height="1.2" fill="#aca899"/>
<rect x="843.5" y="581.5" width="1.2" height="1.2" fill="#aca899"/>
<rect x="846.0" y="576.5" width="1.2" height="1.2" fill="#aca899"/>
<rect x="843.5" y="579.0" width="1.2" height="1.2" fill="#aca899"/>
<rect x="841.0" y="581.5" width="1.2" height="1.2" fill="#aca899"/>
<rect x="83.4" y="96.8" width="544.6" height="238.2" rx="2.5" fill="#7c84de"/>
<rect x="84.0" y="97.39999999999999" width="543.4" height="237.0" rx="2" fill="none" stroke="#a9b0f2" stroke-width="0.9"/>
<rect x="86.2" y="99.6" width="539.0" height="18.100000000000005" fill="#8a8a88"/>
<line x1="86.2" y1="100.1" x2="625.2" y2="100.1" stroke="#9aa0c8" stroke-width="1"/>
<rect x="85.6" y="116.5" width="539.9" height="215.8" fill="#d4d4dc"/>
<rect x="86.6" y="117.7" width="537.9" height="213.60000000000002" fill="#000"/>
<rect x="593.1999999999999" y="101.75" width="14.600000000000023" height="13.4" rx="1.5" fill="url(#sb)" stroke="#c8d4ff" stroke-width="0.7"/>
<rect x="596.9999999999999" y="104.95" width="7.000000000000023" height="7.0" fill="none" stroke="#e8f0ff" stroke-width="0.9"/>
<line x1="596.9999999999999" y1="105.35" x2="604.0" y2="105.35" stroke="#e8f0ff" stroke-width="1.4"/>
<rect x="609.4" y="101.75" width="15.0" height="13.4" rx="1.5" fill="url(#sc)" stroke="#e6c8d0" stroke-width="0.7"/>
<path d="M613.9,105.05 L619.9,111.85000000000001 M619.9,105.05 L613.9,111.85000000000001" stroke="#fbeff2" fill="none" stroke-width="1.5"/>
<text x="88.60000000000001" y="110.75" font-size="9.0" fill="#dcdcd0" font-weight="bold" textLength="94.39999999999999" lengthAdjust="spacingAndGlyphs">Production history plot</text>
<rect x="429.3" y="117.7" width="171.1" height="151" fill="#03027e"/>
<rect x="429.3" y="272.8" width="171.1" height="58.5" fill="#03027e"/>
<rect x="86.6" y="268.8" width="537.9" height="4" fill="#f4f0e4"/>
<line x1="86.6" y1="262.2" x2="624.5" y2="262.2" stroke="#e8e8d8" stroke-width="0.9" stroke-dasharray="1.2,1.9"/>
<line x1="86.6" y1="308.5" x2="429.3" y2="308.5" stroke="#e8e8d8" stroke-width="0.9" stroke-dasharray="1.2,1.9"/>
<line x1="600.4" y1="308.5" x2="624.5" y2="308.5" stroke="#e8e8d8" stroke-width="0.9" stroke-dasharray="1.2,1.9"/>
<line x1="429.3" y1="308.6" x2="600.4" y2="308.6" stroke="#e8e4b8" stroke-width="1.3"/>
<path d="M126.8,261.4 L126.8,244.5 L131.5,244.5 L131.5,200.2 L133.6,200.2 L133.6,244.5 L135.9,244.5 L135.9,208.1 L137.5,208.1 L137.5,247.1 L139.3,247.1 L139.3,196.3 L141.2,196.3 L141.2,247.1 L143.2,247.1 L143.2,202.8 L145.3,202.8 L145.3,200.2 L147.1,200.2 L147.1,187.2 L149.0,187.2 L149.0,183.3 L152.3,183.3 L152.3,239.3 L154.2,239.3 L154.2,223.7 L156.2,223.7 L156.2,161.2 L158.8,161.2 L158.8,140.4 L161.4,140.4 L161.4,133.9 L164.0,133.9 L164.0,137.8 L169.2,137.8 L169.2,143.0 L171.8,143.0 L171.8,148.2 L174.4,148.2 L174.4,135.2 L176.5,135.2 L176.5,127.4 L182.3,127.4 L182.3,132.6 L184.9,132.6 L184.9,137.8 L187.5,137.8 L187.5,149.5 L188.8,149.5 L188.8,135.2 L191.4,135.2 L191.4,149.5 L194.0,149.5 L194.0,150.8 L197.9,150.8 L197.9,153.4 L200.5,153.4 L200.5,179.4 L201.8,179.4 L201.8,249.7 L203.6,249.7 L203.6,141.7 L207.0,141.7 L207.0,182.0 L208.3,182.0 L208.3,150.8 L210.3,150.8 L210.3,182.0 L211.9,182.0 L211.9,150.8 L213.5,150.8 L213.5,182.0 L214.8,182.0 L214.8,150.8 L216.1,150.8 L216.1,143.0 L219.2,143.0 L219.2,137.8 L221.3,137.8 L221.3,163.8 L223.9,163.8 L223.9,182.0 L226.5,182.0 L226.5,162.5 L231.7,162.5 L231.7,166.4 L233.8,166.4 L233.8,171.6 L235.6,171.6 L235.6,175.5 L239.5,175.5 L239.5,182.0 L242.1,182.0 L242.1,169.0 L243.4,169.0 L243.4,179.4 L246.0,179.4 L246.0,195.0 L247.3,195.0 L247.3,223.7 L251.2,223.7 L251.2,221.1 L253.8,221.1 L253.8,215.9 L255.1,215.9 L255.1,175.5 L257.7,175.5 L257.7,202.8 L259.0,202.8 L259.0,175.5 L260.8,175.5 L260.8,178.1 L266.0,178.1 L260.0,175.5 L264.7,175.5 L264.7,202.8 L266.5,202.8 L266.5,218.5 L269.1,218.5 L269.1,223.7 L271.7,223.7 L271.7,226.3 L273.0,226.3 L273.0,215.9 L275.6,215.9 L275.6,205.4 L278.2,205.4 L278.2,187.2 L280.8,187.2 L280.8,192.4 L282.1,192.4 L282.1,185.9 L284.7,185.9 L284.7,192.4 L293.8,192.4 L293.8,195.0 L299.0,195.0 L299.0,198.9 L305.5,198.9 L305.5,192.4 L308.1,192.4 L308.1,195.0 L310.7,195.0 L310.7,197.6 L314.6,197.6 L314.6,240.6 L317.2,240.6 L317.2,261.4 L319.3,261.4 L319.3,169.0 L322.4,169.0 L322.4,184.6 L325.0,184.6 L325.0,193.7 L327.6,193.7 L327.6,195.0 L351.1,195.0 L351.1,192.4 L352.4,192.4 L352.4,215.9 L353.7,215.9 L353.7,244.5 L356.3,244.5 L356.3,206.8 L358.3,206.8 L358.3,261.4 L366.7,261.4 L366.7,187.2 L369.3,187.2 L369.3,174.2 L373.2,174.2 L373.2,187.2 L375.8,187.2 L375.8,261.4 L384.9,261.4 L384.9,184.6 L386.7,184.6 L386.7,154.7 L390.1,154.7 L390.1,261.4 L392.7,261.4 L392.7,191.1 L394.8,191.1 L394.8,208.1 L396.1,208.1 L396.1,202.8 L397.4,202.8 L397.4,261.4 L399.2,261.4 L399.2,182.0 L401.8,182.0 L401.8,202.8 L404.4,202.8 L404.4,208.1 L408.3,208.1 L408.3,209.4 L413.5,209.4 L413.5,213.3 L416.1,213.3 L416.1,252.3 L419.2,252.3 L419.2,188.5 L422.6,188.5 L422.6,208.1 L425.2,208.1 L425.2,221.1 L428.6,221.1 L428.6,261.4" stroke="#c4bc60" fill="none" stroke-width="1.0"/>
<path d="M431,216 L445,221 L470,225.5 L500,229.5 L560,234 L602,238" stroke="#c01030" fill="none" stroke-width="1.2"/>
<path d="M428.9,219.7 L432.8,219.7 L432.8,214.5 L434.9,214.5 L434.9,219.7 L438.0,219.7 L438.0,221.0 L441.1,221.0 L441.1,223.6 L444.5,223.6 L444.5,219.7 L446.3,219.7 L446.3,235.3 L448.9,235.3 L448.9,224.9 L451.0,224.9 L451.0,219.7 L453.1,219.7 L453.1,221.0 L455.7,221.0 L455.7,219.7 L458.3,219.7 L458.3,226.2 L461.4,226.2 L461.4,227.5 L465.3,227.5 L465.3,230.1 L471.8,230.1 L471.8,232.7 L477.0,232.7 L477.0,234.0 L484.8,234.0 L484.8,236.6 L487.4,236.6 L487.4,231.4 L491.3,231.4 L491.3,248.3 L493.9,248.3 L493.9,231.4 L497.8,231.4 L497.8,234.0 L503.0,234.0 L503.0,232.7 L513.4,232.7 L513.4,239.2 L516.0,239.2 L516.0,231.4 L521.2,231.4 L521.2,235.3 L523.8,235.3 L523.8,231.4 L529.0,231.4 L529.0,230.1 L534.2,230.1 L534.2,234.0 L539.4,234.0 L539.4,236.6 L544.6,236.6 L544.6,234.0 L552.4,234.0 L552.4,231.4 L555.0,231.4 L555.0,235.3 L562.8,235.3 L562.8,234.0 L570.6,234.0 L570.6,237.9 L575.8,237.9 L575.8,235.3 L581.0,235.3 L581.0,236.6 L584.9,236.6 L584.9,238.7 L588.8,238.7 L588.8,235.3 L594.1,235.3 L594.1,237.2 L601.9,237.2" stroke="#d8d090" fill="none" stroke-width="1.0"/>
<path d="M430.2,261.5 L430.2,156" stroke="#b8103a" fill="none" stroke-width="2.2"/>
<path d="M112.0,261.6 L125.0,261.5 L133.0,260.5 L145.0,256.0 L164.0,247.5 L184.0,237.0 L203.0,226.5 L222.0,216.5 L242.0,207.0 L266.0,199.0 L290.0,191.0 L322.0,180.0 L350.0,172.5 L374.5,167.7 L390.0,162.5 L410.0,157.5 L429.0,153.4 L470.0,146.5 L520.0,138.5 L560.0,132.0 L601.9,125.5" stroke="#7a4a28" fill="none" stroke-width="3.9" stroke-linecap="round" stroke-linejoin="round"/>
<path d="M112.0,261.6 L125.0,261.5 L133.0,260.5 L145.0,256.0 L164.0,247.5 L184.0,237.0 L203.0,226.5 L222.0,216.5 L242.0,207.0 L266.0,199.0 L290.0,191.0 L322.0,180.0 L350.0,172.5 L374.5,167.7 L390.0,162.5 L410.0,157.5 L429.0,153.4 L470.0,146.5 L520.0,138.5 L560.0,132.0 L601.9,125.5" stroke="#d09a58" fill="none" stroke-width="2.7" stroke-linecap="round" stroke-linejoin="round"/>
<path d="M112.0,261.6 L125.0,261.5 L133.0,260.5 L145.0,256.0 L164.0,247.5 L184.0,237.0 L203.0,226.5 L222.0,216.5 L242.0,207.0 L266.0,199.0 L290.0,191.0 L322.0,180.0 L350.0,172.5 L374.5,167.7 L390.0,162.5 L410.0,157.5 L429.0,153.4 L470.0,146.5 L520.0,138.5 L560.0,132.0 L601.9,125.5" stroke="#f0c878" fill="none" stroke-width="1.6" stroke-dasharray="1.4,1.6"/>
<clipPath id="bz"><rect x="429.3" y="110" width="200" height="100"/></clipPath>
<path d="M112.0,261.6 L125.0,261.5 L133.0,260.5 L145.0,256.0 L164.0,247.5 L184.0,237.0 L203.0,226.5 L222.0,216.5 L242.0,207.0 L266.0,199.0 L290.0,191.0 L322.0,180.0 L350.0,172.5 L374.5,167.7 L390.0,162.5 L410.0,157.5 L429.0,153.4 L470.0,146.5 L520.0,138.5 L560.0,132.0 L601.9,125.5" stroke="#f8c898" fill="none" stroke-width="3.6" stroke-linecap="round" clip-path="url(#bz)"/>
<path d="M112.0,261.6 L125.0,261.5 L133.0,260.5 L145.0,256.0 L164.0,247.5 L184.0,237.0 L203.0,226.5 L222.0,216.5 L242.0,207.0 L266.0,199.0 L290.0,191.0 L322.0,180.0 L350.0,172.5 L374.5,167.7 L390.0,162.5 L410.0,157.5 L429.0,153.4 L470.0,146.5 L520.0,138.5 L560.0,132.0 L601.9,125.5" stroke="#ffe0b8" fill="none" stroke-width="1.2" stroke-dasharray="2,2" clip-path="url(#bz)"/>
<path d="M119.6,276.6h3M121.1,275.1v3M135.8,290.4h3M137.3,288.9v3M146.5,285.8h3M148.0,284.3v3M157.8,306.2h3M159.3,304.7v3M167.6,306.9h3M169.1,305.4v3M180.7,317.0h3M182.2,315.5v3M193.0,318.5h3M194.5,317.0v3M205.2,318.5h3M206.7,317.0v3M207.3,318.5h3M208.8,317.0v3M218.0,320.0h3M219.5,318.5v3M230.2,323.0h3M231.7,321.5v3M240.3,323.0h3M241.8,321.5v3M251.9,323.7h3M253.4,322.2v3M261.7,323.0h3M263.2,321.5v3M274.5,323.7h3M276.0,322.2v3M286.1,326.1h3M287.6,324.6v3M296.8,326.1h3M298.3,324.6v3M309.1,327.6h3M310.6,326.1v3M320.4,325.2h3M321.9,323.7v3M330.8,327.6h3M332.3,326.1v3M342.7,328.5h3M344.2,327.0v3M350.3,328.2h3M351.8,326.7v3M355.3,325.5h3M356.8,324.0v3M370.4,323.8h3M371.9,322.3v3M384.9,321.5h3M386.4,320.0v3M392.3,327.2h3M393.8,325.7v3M402.3,327.2h3M403.8,325.7v3M415.1,327.2h3M416.6,325.7v3M423.2,308.7h3M424.7,307.2v3" stroke="#58c050" fill="none" stroke-width="0.8"/>
<path d="M436.6,326.2h3M438.1,324.7v3M448.7,327.2h3M450.2,325.7v3M456.8,327.2h3M458.3,325.7v3M471.2,328.8h3M472.7,327.3v3M481.3,327.2h3M482.8,325.7v3M493.7,324.8h3M495.2,323.3v3M503.8,323.1h3M505.3,321.6v3M515.9,326.2h3M517.4,324.7v3M531.7,327.2h3M533.2,325.7v3M543.5,326.2h3M545.0,324.7v3M552.9,325.5h3M554.4,324.0v3M567.0,326.2h3M568.5,324.7v3M573.0,322.1h3M574.5,320.6v3M585.5,324.8h3M587.0,323.3v3M596.5,322.1h3M598.0,320.6v3" stroke="#80c8a0" fill="none" stroke-width="0.8"/>
<rect x="83.4" y="344.8" width="68.69999999999999" height="70.69999999999999" rx="2.5" fill="#7c84de"/>
<rect x="84.0" y="345.40000000000003" width="67.49999999999999" height="69.49999999999999" rx="2" fill="none" stroke="#a9b0f2" stroke-width="0.9"/>
<rect x="86.2" y="347.6" width="63.09999999999999" height="18.299999999999965" fill="#8a8a88"/>
<line x1="86.2" y1="348.1" x2="149.29999999999998" y2="348.1" stroke="#9aa0c8" stroke-width="1"/>
<rect x="86.5" y="364.7" width="63.19999999999999" height="48.40000000000005" fill="#d4d4dc"/>
<rect x="87.5" y="365.9" width="61.19999999999999" height="46.200000000000045" fill="#000"/>
<rect x="117.30000000000001" y="349.85" width="14.599999999999994" height="13.4" rx="1.5" fill="url(#sb)" stroke="#c8d4ff" stroke-width="0.7"/>
<rect x="121.10000000000001" y="353.05" width="6.999999999999995" height="7.0" fill="none" stroke="#e8f0ff" stroke-width="0.9"/>
<line x1="121.10000000000001" y1="353.45000000000005" x2="128.1" y2="353.45000000000005" stroke="#e8f0ff" stroke-width="1.4"/>
<rect x="133.5" y="349.85" width="15.0" height="13.4" rx="1.5" fill="url(#sc)" stroke="#e6c8d0" stroke-width="0.7"/>
<path d="M138.0,353.15000000000003 L144.0,359.95 M144.0,353.15000000000003 L138.0,359.95" stroke="#fbeff2" fill="none" stroke-width="1.5"/>
<text x="88.60000000000001" y="358.85" font-size="9.0" fill="#dcdcd0" font-weight="bold" textLength="26.099999999999994" lengthAdjust="spacingAndGlyphs">LogL...</text>
<rect x="206.8" y="345.2" width="75.5" height="69.60000000000002" rx="2.5" fill="#7c84de"/>
<rect x="207.4" y="345.8" width="74.3" height="68.40000000000002" rx="2" fill="none" stroke="#a9b0f2" stroke-width="0.9"/>
<rect x="209.60000000000002" y="348.0" width="69.9" height="17.800000000000022" fill="#8a8a88"/>
<line x1="209.60000000000002" y1="348.5" x2="279.5" y2="348.5" stroke="#9aa0c8" stroke-width="1"/>
<rect x="209.2" y="364.6" width="71.30000000000001" height="48.500000000000014" fill="#d4d4dc"/>
<rect x="210.2" y="365.8" width="69.30000000000001" height="46.30000000000001" fill="#000"/>
<rect x="247.49999999999997" y="350.0" width="14.599999999999994" height="13.4" rx="1.5" fill="url(#sb)" stroke="#c8d4ff" stroke-width="0.7"/>
<rect x="251.29999999999998" y="353.2" width="6.999999999999995" height="7.0" fill="none" stroke="#e8f0ff" stroke-width="0.9"/>
<line x1="251.29999999999998" y1="353.6" x2="258.29999999999995" y2="353.6" stroke="#e8f0ff" stroke-width="1.4"/>
<rect x="263.7" y="350.0" width="15.0" height="13.4" rx="1.5" fill="url(#sc)" stroke="#e6c8d0" stroke-width="0.7"/>
<path d="M268.2,353.3 L274.2,360.09999999999997 M274.2,353.3 L268.2,360.09999999999997" stroke="#fbeff2" fill="none" stroke-width="1.5"/>
<text x="212.0" y="359.0" font-size="9.0" fill="#dcdcd0" font-weight="bold" textLength="28.80000000000001" lengthAdjust="spacingAndGlyphs">Fetko...</text>
<rect x="329.3" y="345.3" width="121.69999999999999" height="70.30000000000001" rx="2.5" fill="#7c84de"/>
<rect x="329.90000000000003" y="345.90000000000003" width="120.49999999999999" height="69.10000000000001" rx="2" fill="none" stroke="#a9b0f2" stroke-width="0.9"/>
<rect x="332.1" y="348.1" width="116.1" height="17.599999999999977" fill="#8a8a88"/>
<line x1="332.1" y1="348.6" x2="448.2" y2="348.6" stroke="#9aa0c8" stroke-width="1"/>
<rect x="331.6" y="364.5" width="116.59999999999997" height="48.300000000000026" fill="#d4d4dc"/>
<rect x="332.6" y="365.7" width="114.59999999999997" height="46.10000000000002" fill="#000"/>
<rect x="416.19999999999993" y="350.0" width="14.600000000000023" height="13.4" rx="1.5" fill="url(#sb)" stroke="#c8d4ff" stroke-width="0.7"/>
<rect x="419.99999999999994" y="353.2" width="7.000000000000023" height="7.0" fill="none" stroke="#e8f0ff" stroke-width="0.9"/>
<line x1="419.99999999999994" y1="353.6" x2="426.99999999999994" y2="353.6" stroke="#e8f0ff" stroke-width="1.4"/>
<rect x="432.4" y="350.0" width="15.0" height="13.4" rx="1.5" fill="url(#sc)" stroke="#e6c8d0" stroke-width="0.7"/>
<path d="M436.9,353.3 L442.9,360.09999999999997 M442.9,353.3 L436.9,360.09999999999997" stroke="#fbeff2" fill="none" stroke-width="1.5"/>
<text x="334.5" y="359.0" font-size="9.0" fill="#dcdcd0" font-weight="bold" textLength="78.30000000000001" lengthAdjust="spacingAndGlyphs">Normalized Rate-...</text>
<rect x="83.4" y="417.5" width="68.69999999999999" height="68.69999999999999" rx="2.5" fill="#7c84de"/>
<rect x="84.0" y="418.1" width="67.49999999999999" height="67.49999999999999" rx="2" fill="none" stroke="#a9b0f2" stroke-width="0.9"/>
<rect x="86.2" y="420.3" width="63.09999999999999" height="18.300000000000022" fill="#8a8a88"/>
<line x1="86.2" y1="420.8" x2="149.29999999999998" y2="420.8" stroke="#9aa0c8" stroke-width="1"/>
<rect x="86.5" y="437.40000000000003" width="63.19999999999999" height="47.09999999999998" fill="#d4d4dc"/>
<rect x="87.5" y="438.6" width="61.19999999999999" height="44.89999999999998" fill="#000"/>
<rect x="117.30000000000001" y="422.55" width="14.599999999999994" height="13.4" rx="1.5" fill="url(#sb)" stroke="#c8d4ff" stroke-width="0.7"/>
<rect x="121.10000000000001" y="425.75" width="6.999999999999995" height="7.0" fill="none" stroke="#e8f0ff" stroke-width="0.9"/>
<line x1="121.10000000000001" y1="426.15000000000003" x2="128.1" y2="426.15000000000003" stroke="#e8f0ff" stroke-width="1.4"/>
<rect x="133.5" y="422.55" width="15.0" height="13.4" rx="1.5" fill="url(#sc)" stroke="#e6c8d0" stroke-width="0.7"/>
<path d="M138.0,425.85 L144.0,432.65 M144.0,425.85 L138.0,432.65" stroke="#fbeff2" fill="none" stroke-width="1.5"/>
<text x="88.60000000000001" y="431.55" font-size="9.0" fill="#dcdcd0" font-weight="bold" textLength="25.39999999999999" lengthAdjust="spacingAndGlyphs">Blas...</text>
<rect x="206.1" y="417.5" width="87.79999999999998" height="68.69999999999999" rx="2.5" fill="#7c84de"/>
<rect x="206.7" y="418.1" width="86.59999999999998" height="67.49999999999999" rx="2" fill="none" stroke="#a9b0f2" stroke-width="0.9"/>
<rect x="208.9" y="420.3" width="82.19999999999999" height="17.599999999999977" fill="#8a8a88"/>
<line x1="208.9" y1="420.8" x2="291.09999999999997" y2="420.8" stroke="#9aa0c8" stroke-width="1"/>
<rect x="209.2" y="436.7" width="82.30000000000001" height="48.40000000000005" fill="#d4d4dc"/>
<rect x="210.2" y="437.9" width="80.30000000000001" height="46.200000000000045" fill="#000"/>
<rect x="259.0999999999999" y="422.2" width="14.600000000000023" height="13.4" rx="1.5" fill="url(#sb)" stroke="#c8d4ff" stroke-width="0.7"/>
<rect x="262.8999999999999" y="425.4" width="7.000000000000023" height="7.0" fill="none" stroke="#e8f0ff" stroke-width="0.9"/>
<line x1="262.8999999999999" y1="425.8" x2="269.8999999999999" y2="425.8" stroke="#e8f0ff" stroke-width="1.4"/>
<rect x="275.29999999999995" y="422.2" width="15.0" height="13.4" rx="1.5" fill="url(#sc)" stroke="#e6c8d0" stroke-width="0.7"/>
<path d="M279.79999999999995,425.5 L285.79999999999995,432.29999999999995 M285.79999999999995,425.5 L279.79999999999995,432.29999999999995" stroke="#fbeff2" fill="none" stroke-width="1.5"/>
<text x="211.29999999999998" y="431.2" font-size="9.0" fill="#dcdcd0" font-weight="bold" textLength="43.10000000000002" lengthAdjust="spacingAndGlyphs">Blasinga...</text>
<rect x="329.3" y="418.4" width="121.69999999999999" height="68.0" rx="2.5" fill="#7c84de"/>
<rect x="329.90000000000003" y="419.0" width="120.49999999999999" height="66.8" rx="2" fill="none" stroke="#a9b0f2" stroke-width="0.9"/>
<rect x="332.1" y="421.2" width="116.1" height="15.50000000000001" fill="#8a8a88"/>
<line x1="332.1" y1="421.7" x2="448.2" y2="421.7" stroke="#9aa0c8" stroke-width="1"/>
<rect x="331.6" y="435.5" width="116.59999999999997" height="48.800000000000026" fill="#d4d4dc"/>
<rect x="332.6" y="436.7" width="114.59999999999997" height="46.60000000000002" fill="#000"/>
<rect x="416.19999999999993" y="422.04999999999995" width="14.600000000000023" height="13.4" rx="1.5" fill="url(#sb)" stroke="#c8d4ff" stroke-width="0.7"/>
<rect x="419.99999999999994" y="425.24999999999994" width="7.000000000000023" height="7.0" fill="none" stroke="#e8f0ff" stroke-width="0.9"/>
<line x1="419.99999999999994" y1="425.65" x2="426.99999999999994" y2="425.65" stroke="#e8f0ff" stroke-width="1.4"/>
<rect x="432.4" y="422.04999999999995" width="15.0" height="13.4" rx="1.5" fill="url(#sc)" stroke="#e6c8d0" stroke-width="0.7"/>
<path d="M436.9,425.34999999999997 L442.9,432.1499999999999 M442.9,425.34999999999997 L436.9,432.1499999999999" stroke="#fbeff2" fill="none" stroke-width="1.5"/>
<text x="334.5" y="431.04999999999995" font-size="9.0" fill="#dcdcd0" font-weight="bold" textLength="31.69999999999999" lengthAdjust="spacingAndGlyphs">p-q plot</text>
<rect x="83.6" y="489.4" width="68.80000000000001" height="70.20000000000005" rx="2.5" fill="#7c84de"/>
<rect x="84.19999999999999" y="490.0" width="67.60000000000001" height="69.00000000000004" rx="2" fill="none" stroke="#a9b0f2" stroke-width="0.9"/>
<rect x="86.39999999999999" y="492.2" width="63.20000000000001" height="17.50000000000001" fill="#8a8a88"/>
<line x1="86.39999999999999" y1="492.7" x2="149.6" y2="492.7" stroke="#9aa0c8" stroke-width="1"/>
<rect x="87" y="508.5" width="62.69999999999999" height="47.79999999999997" fill="#d4d4dc"/>
<rect x="88" y="509.7" width="60.69999999999999" height="45.599999999999966" fill="#000"/>
<rect x="117.60000000000002" y="494.04999999999995" width="14.599999999999994" height="13.4" rx="1.5" fill="url(#sb)" stroke="#c8d4ff" stroke-width="0.7"/>
<rect x="121.40000000000002" y="497.24999999999994" width="6.999999999999995" height="7.0" fill="none" stroke="#e8f0ff" stroke-width="0.9"/>
<line x1="121.40000000000002" y1="497.65" x2="128.4" y2="497.65" stroke="#e8f0ff" stroke-width="1.4"/>
<rect x="133.8" y="494.04999999999995" width="15.0" height="13.4" rx="1.5" fill="url(#sc)" stroke="#e6c8d0" stroke-width="0.7"/>
<path d="M138.3,497.34999999999997 L144.3,504.1499999999999 M144.3,497.34999999999997 L138.3,504.1499999999999" stroke="#fbeff2" fill="none" stroke-width="1.5"/>
<text x="88.8" y="503.04999999999995" font-size="9.0" fill="#dcdcd0" font-weight="bold" textLength="23.799999999999997" lengthAdjust="spacingAndGlyphs">Fetk...</text>
<rect x="206.1" y="489.2" width="121.50000000000003" height="70.19999999999999" rx="2.5" fill="#7c84de"/>
<rect x="206.7" y="489.8" width="120.30000000000003" height="68.99999999999999" rx="2" fill="none" stroke="#a9b0f2" stroke-width="0.9"/>
<rect x="208.9" y="492.0" width="115.90000000000003" height="17.00000000000001" fill="#8a8a88"/>
<line x1="208.9" y1="492.5" x2="324.8" y2="492.5" stroke="#9aa0c8" stroke-width="1"/>
<rect x="208.5" y="507.8" width="117.0" height="48.800000000000026" fill="#d4d4dc"/>
<rect x="209.5" y="509" width="115.0" height="46.60000000000002" fill="#000"/>
<rect x="292.79999999999995" y="493.6" width="14.600000000000023" height="13.4" rx="1.5" fill="url(#sb)" stroke="#c8d4ff" stroke-width="0.7"/>
<rect x="296.59999999999997" y="496.8" width="7.000000000000023" height="7.0" fill="none" stroke="#e8f0ff" stroke-width="0.9"/>
<line x1="296.59999999999997" y1="497.20000000000005" x2="303.59999999999997" y2="497.20000000000005" stroke="#e8f0ff" stroke-width="1.4"/>
<rect x="309.0" y="493.6" width="15.0" height="13.4" rx="1.5" fill="url(#sc)" stroke="#e6c8d0" stroke-width="0.7"/>
<path d="M313.5,496.90000000000003 L319.5,503.7 M319.5,496.90000000000003 L313.5,503.7" stroke="#fbeff2" fill="none" stroke-width="1.5"/>
<text x="211.29999999999998" y="502.6" font-size="9.0" fill="#dcdcd0" font-weight="bold" textLength="36.80000000000001" lengthAdjust="spacingAndGlyphs">Arps plot</text>
<rect x="328.8" y="489.2" width="121.5" height="69.50000000000006" rx="2.5" fill="#7c84de"/>
<rect x="329.40000000000003" y="489.8" width="120.3" height="68.30000000000005" rx="2" fill="none" stroke="#a9b0f2" stroke-width="0.9"/>
<rect x="331.6" y="492.0" width="115.9" height="17.00000000000001" fill="#0c2a80"/>
<rect x="331.3" y="507.8" width="116.89999999999998" height="48.800000000000026" fill="#d4d4dc"/>
<rect x="332.3" y="509" width="114.89999999999998" height="46.60000000000002" fill="#000"/>
<rect x="415.49999999999994" y="493.6" width="14.600000000000023" height="13.4" rx="1.5" fill="url(#sb)" stroke="#c8d4ff" stroke-width="0.7"/>
<rect x="419.29999999999995" y="496.8" width="7.000000000000023" height="7.0" fill="none" stroke="#e8f0ff" stroke-width="0.9"/>
<line x1="419.29999999999995" y1="497.20000000000005" x2="426.29999999999995" y2="497.20000000000005" stroke="#e8f0ff" stroke-width="1.4"/>
<rect x="431.7" y="493.6" width="15.0" height="13.4" rx="1.5" fill="url(#cls)" stroke="#e6c8d0" stroke-width="0.7"/>
<path d="M436.2,496.90000000000003 L442.2,503.7 M442.2,496.90000000000003 L436.2,503.7" stroke="#fbeff2" fill="none" stroke-width="1.5"/>
<text x="334.0" y="502.6" font-size="9.0" fill="#fff" font-weight="bold" textLength="40.60000000000002" lengthAdjust="spacingAndGlyphs">p/z-Q plot</text>
<path d="M103.1,365.9V412.1M118.8,365.9V412.1M133.7,365.9V412.1M87.5,381.5H148.7M87.5,396.5H148.7" stroke="#c8c8c8" fill="none" stroke-width="0.9"/>
<rect x="87.9" y="366.29999999999995" width="60.39999999999999" height="45.40000000000005" fill="none" stroke="#d8d8d8" stroke-width="0.8"/>
<path d="M88.5,379.7 Q100,375 111.5,372.1 Q121,374 130.2,378.5" stroke="#8a2030" fill="none" stroke-width="1.8"/>
<line x1="88" y1="392.9" x2="148" y2="392.9" stroke="#b8b8b8" stroke-width="0.8" stroke-dasharray="1,1.5"/>
<path d="M88.5,385.2 L114,382" stroke="#d8e8d8" fill="none" stroke-width="0.7"/>
<path d="M114,384 Q130,381 143.8,378" stroke="#30d830" fill="none" stroke-width="2.8"/>
<path d="M101.5,396 L102.5,383 L104,390 L105,379 L106.5,388 L108,378 L109,391 L110.5,380 L112,393 L113,381" stroke="#f0f0f0" fill="none" stroke-width="0.8"/>
<path d="M120,391.2 L126,390.5 L130,389 L134,390 L138,387.5 L143.8,388.7" stroke="#e81818" fill="none" stroke-width="3.2"/>
<path d="M135,408 L136.5,392 L138,402 L139.5,389 L141,406 L142.5,391 L143.5,400 L144,387" stroke="#f0f0f0" fill="none" stroke-width="0.8"/>
<circle cx="93.6" cy="405.7" r="1.6" fill="#601010"/><circle cx="111.5" cy="400.6" r="1.6" fill="#601010"/>
<path d="M221.8,365.8V412.1M233.3,365.8V412.1M244.9,365.8V412.1M256.4,365.8V412.1M268,365.8V412.1M210.2,377.4H279.5M210.2,389H279.5M210.2,400.5H279.5" stroke="#c8c8c8" fill="none" stroke-width="0.9"/>
<rect x="210.6" y="366.2" width="68.50000000000001" height="45.500000000000014" fill="none" stroke="#d8d8d8" stroke-width="0.8"/>
<path d="M213,366.5 L238.4,368.5 L237,372.5 Q225,370 213,368.5z" stroke="none" fill="#f0e020" stroke-width="1"/>
<path d="M211.5,369.5 L240.2,377" stroke="#20a020" fill="none" stroke-width="2.6"/>
<path d="M211.5,375.5 Q225,377 238.4,378" stroke="#2020e0" fill="none" stroke-width="3.2"/>
<path d="M211.5,374 Q225,375.5 238.4,376.5" stroke="#60d0f0" fill="none" stroke-width="0.7"/>
<path d="M213.2,409.2 L237.6,384.9" stroke="#e8b040" fill="none" stroke-width="3" stroke-linecap="round"/>
<path d="M213.5,408 L222,400" stroke="#7a9a30" fill="none" stroke-width="2.2"/>
<path d="M216.7,411 L248.9,384" stroke="#30b8e8" fill="none" stroke-width="1.2"/>
<path d="M219,411 L240,393" stroke="#2030d0" fill="none" stroke-width="2"/>
<path d="M214,404 L246,382" stroke="#30a040" fill="none" stroke-width="0.8"/>
<path d="M255,378.8 Q265,374 278.4,371.8" stroke="#f09020" fill="none" stroke-width="4.3"/>
<path d="M256,377 Q266,373 278.4,370" stroke="#f8d040" fill="none" stroke-width="1"/>
<path d="M250.6,379.7 Q262,386 265,395 Q268,403 268.9,411" stroke="#e02810" fill="none" stroke-width="2.2"/>
<path d="M252,379 Q268,388 272,398 Q276,405 277.6,411" stroke="#d8a040" fill="none" stroke-width="1.2"/>
<path d="M253.0,380.0 Q264.0,390.0 269,411" stroke="#c87030" fill="none" stroke-width="0.6"/>
<path d="M254.5,380.8 Q266.2,390.5 271,411" stroke="#c87030" fill="none" stroke-width="0.6"/>
<path d="M256.0,381.6 Q268.4,391.0 273,411" stroke="#c87030" fill="none" stroke-width="0.6"/>
<path d="M257.5,382.4 Q270.6,391.5 275,411" stroke="#c87030" fill="none" stroke-width="0.6"/>
<path d="M259.0,383.2 Q272.8,392.0 277,411" stroke="#c87030" fill="none" stroke-width="0.6"/>
<path d="M266,398 L272,411" stroke="#b06040" fill="none" stroke-width="0.5"/>
<path d="M269,398 L274,411" stroke="#b06040" fill="none" stroke-width="0.5"/>
<path d="M272,398 L276,411" stroke="#b06040" fill="none" stroke-width="0.5"/>
<path d="M275,398 L278,411" stroke="#b06040" fill="none" stroke-width="0.5"/>
<path d="M333.4,366.7 L445.7,411" stroke="#e0e0e0" fill="none" stroke-width="0.8"/>
<line x1="333" y1="410.6" x2="447" y2="410.6" stroke="#e0e0e0" stroke-width="0.8" stroke-dasharray="1,1.5"/>
<g fill="none" stroke="#f0e828" stroke-width="0.9"><circle cx="347.5" cy="389.5" r="1.4"/><circle cx="365.0" cy="392.2" r="1.4"/><circle cx="340.8" cy="383.2" r="1.4"/><circle cx="349.2" cy="389.7" r="1.4"/><circle cx="375.2" cy="393.8" r="1.4"/><circle cx="344.1" cy="386.0" r="1.4"/><circle cx="360.7" cy="391.1" r="1.4"/><circle cx="342.3" cy="383.9" r="1.4"/><circle cx="352.3" cy="391.5" r="1.4"/><circle cx="357.6" cy="390.6" r="1.4"/><circle cx="371.5" cy="392.5" r="1.4"/><circle cx="373.1" cy="394.4" r="1.4"/><circle cx="378.6" cy="394.0" r="1.4"/><circle cx="348.5" cy="389.1" r="1.4"/><circle cx="366.0" cy="393.9" r="1.4"/><circle cx="352.8" cy="393.9" r="1.4"/><circle cx="365.3" cy="391.6" r="1.4"/><circle cx="381.9" cy="391.2" r="1.4"/><circle cx="369.5" cy="394.7" r="1.4"/><circle cx="382.5" cy="393.1" r="1.4"/><circle cx="371.1" cy="395.1" r="1.4"/><circle cx="363.5" cy="393.0" r="1.4"/><circle cx="377.5" cy="393.6" r="1.4"/><circle cx="374.6" cy="393.8" r="1.4"/><circle cx="350.5" cy="388.7" r="1.4"/><circle cx="341.3" cy="384.6" r="1.4"/><circle cx="370.0" cy="395.1" r="1.4"/><circle cx="379.0" cy="393.8" r="1.4"/><circle cx="351.9" cy="391.9" r="1.4"/><circle cx="341.4" cy="385.5" r="1.4"/><circle cx="365.7" cy="392.8" r="1.4"/><circle cx="376.8" cy="396.2" r="1.4"/><circle cx="378.1" cy="394.6" r="1.4"/><circle cx="359.9" cy="391.5" r="1.4"/><circle cx="361.2" cy="390.8" r="1.4"/><circle cx="358.6" cy="393.5" r="1.4"/><circle cx="347.5" cy="392.6" r="1.4"/><circle cx="360.5" cy="392.6" r="1.4"/><circle cx="354.7" cy="392.9" r="1.4"/><circle cx="365.6" cy="392.3" r="1.4"/><circle cx="365.0" cy="393.0" r="1.4"/><circle cx="351.9" cy="390.3" r="1.4"/><circle cx="342.0" cy="384.8" r="1.4"/><circle cx="381.5" cy="395.1" r="1.4"/><circle cx="364.2" cy="393.5" r="1.4"/><circle cx="350.1" cy="392.3" r="1.4"/><circle cx="349.4" cy="392.3" r="1.4"/><circle cx="339.6" cy="383.6" r="1.4"/><circle cx="351.1" cy="393.2" r="1.4"/><circle cx="348.7" cy="390.9" r="1.4"/><circle cx="370.5" cy="393.6" r="1.4"/><circle cx="352.2" cy="390.7" r="1.4"/><circle cx="377.6" cy="394.5" r="1.4"/><circle cx="368.3" cy="392.0" r="1.4"/><circle cx="348.7" cy="390.4" r="1.4"/><circle cx="347.3" cy="386.8" r="1.4"/><circle cx="346.1" cy="390.5" r="1.4"/><circle cx="367.4" cy="391.8" r="1.4"/><circle cx="344.1" cy="389.0" r="1.4"/><circle cx="349.0" cy="391.4" r="1.4"/><circle cx="353.4" cy="394.3" r="1.4"/><circle cx="347.6" cy="387.9" r="1.4"/><circle cx="379.2" cy="393.6" r="1.4"/><circle cx="381.6" cy="393.5" r="1.4"/><circle cx="373.0" cy="391.8" r="1.4"/><circle cx="360.3" cy="393.7" r="1.4"/><circle cx="349.1" cy="390.2" r="1.4"/><circle cx="350.1" cy="390.4" r="1.4"/><circle cx="378.4" cy="391.4" r="1.4"/><circle cx="379.8" cy="392.9" r="1.4"/><circle cx="340.4" cy="383.3" r="1.4"/><circle cx="349.9" cy="389.9" r="1.4"/><circle cx="355.9" cy="392.4" r="1.4"/><circle cx="351.9" cy="394.0" r="1.4"/><circle cx="358.4" cy="391.8" r="1.4"/><circle cx="345.3" cy="388.5" r="1.4"/><circle cx="346.5" cy="385.8" r="1.4"/><circle cx="375.3" cy="393.4" r="1.4"/><circle cx="366.6" cy="392.4" r="1.4"/><circle cx="349.4" cy="391.8" r="1.4"/><circle cx="391.4" cy="392.6" r="1.4"/><circle cx="388.0" cy="394.2" r="1.4"/><circle cx="388.4" cy="394.3" r="1.4"/><circle cx="388.5" cy="394.3" r="1.4"/><circle cx="395.8" cy="394.2" r="1.4"/><circle cx="392.0" cy="393.7" r="1.4"/><circle cx="390.5" cy="393.7" r="1.4"/><circle cx="393.2" cy="394.7" r="1.4"/><circle cx="392.7" cy="393.7" r="1.4"/><circle cx="390.6" cy="394.4" r="1.4"/></g>
<g fill="none" stroke="#c8c040" stroke-width="0.8"><circle cx="338.5" cy="368.6" r="1.6"/><circle cx="340.3" cy="376.1" r="1.6"/><circle cx="346.9" cy="395.8" r="1.6"/><circle cx="362.0" cy="402.0" r="1.6"/><circle cx="351.6" cy="385.5" r="1.6"/><circle cx="367.6" cy="397.2" r="1.6"/></g>
<path d="M103.1,438.6V483.5M118.8,438.6V483.5M133.7,438.6V483.5M87.5,453.5H148.7M87.5,468.5H148.7" stroke="#c8c8c8" fill="none" stroke-width="0.9"/>
<rect x="87.9" y="439.0" width="60.39999999999999" height="44.09999999999998" fill="none" stroke="#d8d8d8" stroke-width="0.8"/>
<path d="M105.5,448 Q112,449 120,450.5" stroke="#801818" fill="none" stroke-width="1"/>
<path d="M88.5,455.6 Q105,460 120,464" stroke="#701010" fill="none" stroke-width="4" opacity="0.9"/>
<path d="M112,450.5 Q130,453 148,455.6" stroke="#30c830" fill="none" stroke-width="3.2" opacity="0.9"/>
<path d="M118,451 Q132,452.5 148,454" stroke="#60f060" fill="none" stroke-width="1"/>
<path d="M122.6,461.5 Q136,464 148,468.3" stroke="#e81818" fill="none" stroke-width="3"/>
<path d="M88.5,459 L107.2,466.6" stroke="#e8e8e8" fill="none" stroke-width="0.8"/>
<path d="M108.5,466 L109.5,474 L111,463 L112.5,476 L114,467" stroke="#e0e0e0" fill="none" stroke-width="0.7"/>
<path d="M126.8,483.6 Q130,472 137,469 L139,471 L141,466 L143,474 L145,465 L147,470" stroke="#f0f0f0" fill="none" stroke-width="0.8"/>
<circle cx="98.3" cy="449.6" r="1.5" fill="#30e030"/><circle cx="132.7" cy="479.4" r="1" fill="#d02020"/>
<path d="M221.8,437.9V484.1M233.3,437.9V484.1M244.9,437.9V484.1M256.5,437.9V484.1M268,437.9V484.1M279.6,437.9V484.1M210.2,449.5H290.5M210.2,461H290.5M210.2,472.6H290.5" stroke="#c8c8c8" fill="none" stroke-width="0.9"/>
<rect x="210.6" y="438.29999999999995" width="79.50000000000001" height="45.40000000000005" fill="none" stroke="#d8d8d8" stroke-width="0.8"/>
<path d="M211,441 Q235,452 260,462.0" stroke="#e02020" fill="none" stroke-width="1"/>
<path d="M211,444 Q235,454 260,463.5" stroke="#c01818" fill="none" stroke-width="1"/>
<path d="M211,447 Q235,456 260,465.0" stroke="#f04020" fill="none" stroke-width="1"/>
<path d="M211,450 Q235,458 260,466.5" stroke="#d83020" fill="none" stroke-width="1"/>
<path d="M211,453 Q235,460 260,468.0" stroke="#e85030" fill="none" stroke-width="1"/>
<path d="M211,456 Q235,462 260,469.5" stroke="#a01010" fill="none" stroke-width="1"/>
<path d="M211,457 Q225,458 232,460" stroke="#90e040" fill="none" stroke-width="2.5"/>
<path d="M234,460 L250,463" stroke="#20e020" fill="none" stroke-width="4" stroke-linecap="round"/>
<path d="M236,466 L258,471" stroke="#e01818" fill="none" stroke-width="3"/>
<path d="M212,465 Q240,470 255,468 Q270,470 290,483" stroke="#3030c0" fill="none" stroke-width="1"/>
<path d="M215,471 Q245,474 258,464 Q272,468 284,483" stroke="#4040d0" fill="none" stroke-width="1"/>
<path d="M211,476 Q240,476 256,466 Q275,470 278,483" stroke="#2020a0" fill="none" stroke-width="1"/>
<path d="M215,472 L240,468 L250,475" stroke="#f0f0f0" fill="none" stroke-width="0.8"/>
<g fill="none" stroke="#e8e020" stroke-width="0.9"><circle cx="376.9" cy="468.3" r="1.5"/><circle cx="378.7" cy="470.2" r="1.5"/><circle cx="373.5" cy="465.1" r="1.5"/><circle cx="388.7" cy="477.3" r="1.5"/><circle cx="375.8" cy="460.5" r="1.5"/><circle cx="378.9" cy="462.1" r="1.5"/><circle cx="383.9" cy="472.9" r="1.5"/><circle cx="372.6" cy="462.1" r="1.5"/><circle cx="376.4" cy="466.0" r="1.5"/><circle cx="377.8" cy="471.9" r="1.5"/><circle cx="380.8" cy="469.3" r="1.5"/><circle cx="383.4" cy="474.4" r="1.5"/><circle cx="394.8" cy="479.8" r="1.5"/><circle cx="385.2" cy="476.2" r="1.5"/><circle cx="381.3" cy="468.8" r="1.5"/><circle cx="381.3" cy="467.4" r="1.5"/><circle cx="390.3" cy="479.2" r="1.5"/><circle cx="378.7" cy="464.5" r="1.5"/><circle cx="390.0" cy="480.2" r="1.5"/><circle cx="384.6" cy="471.6" r="1.5"/><circle cx="372.0" cy="468.5" r="1.5"/><circle cx="387.8" cy="476.8" r="1.5"/><circle cx="378.1" cy="465.3" r="1.5"/><circle cx="374.2" cy="464.3" r="1.5"/><circle cx="376.3" cy="464.3" r="1.5"/><circle cx="386.1" cy="475.1" r="1.5"/><circle cx="376.2" cy="471.6" r="1.5"/><circle cx="386.1" cy="480.8" r="1.5"/><circle cx="373.7" cy="468.5" r="1.5"/><circle cx="389.4" cy="477.5" r="1.5"/><circle cx="376.7" cy="469.6" r="1.5"/><circle cx="378.7" cy="468.7" r="1.5"/><circle cx="373.3" cy="462.8" r="1.5"/><circle cx="382.3" cy="474.6" r="1.5"/><circle cx="387.7" cy="479.6" r="1.5"/><circle cx="389.1" cy="478.8" r="1.5"/><circle cx="390.0" cy="476.8" r="1.5"/><circle cx="376.1" cy="460.2" r="1.5"/><circle cx="380.5" cy="464.1" r="1.5"/><circle cx="383.0" cy="473.4" r="1.5"/><circle cx="375.1" cy="462.3" r="1.5"/><circle cx="385.5" cy="478.8" r="1.5"/><circle cx="383.4" cy="474.1" r="1.5"/><circle cx="387.3" cy="475.6" r="1.5"/><circle cx="384.7" cy="469.6" r="1.5"/><circle cx="380.2" cy="473.5" r="1.5"/><circle cx="376.0" cy="479.7" r="1.5"/><circle cx="377.4" cy="478.7" r="1.5"/><circle cx="383.8" cy="471.2" r="1.5"/><circle cx="388.9" cy="465.2" r="1.5"/><circle cx="383.6" cy="467.8" r="1.5"/><circle cx="379.7" cy="478.0" r="1.5"/><circle cx="384.7" cy="468.1" r="1.5"/><circle cx="381.2" cy="469.4" r="1.5"/><circle cx="380.4" cy="473.5" r="1.5"/><circle cx="382.3" cy="466.5" r="1.5"/><circle cx="384.1" cy="464.6" r="1.5"/><circle cx="385.6" cy="467.4" r="1.5"/><circle cx="387.9" cy="464.0" r="1.5"/><circle cx="386.8" cy="465.2" r="1.5"/><circle cx="382.0" cy="470.9" r="1.5"/><circle cx="385.2" cy="470.7" r="1.5"/><circle cx="389.7" cy="462.1" r="1.5"/><circle cx="380.5" cy="470.2" r="1.5"/><circle cx="381.6" cy="471.2" r="1.5"/><circle cx="421.6" cy="474.8" r="1.5"/><circle cx="413.9" cy="478.1" r="1.5"/><circle cx="411.2" cy="474.1" r="1.5"/><circle cx="410.0" cy="477.5" r="1.5"/><circle cx="418.2" cy="475.7" r="1.5"/><circle cx="422.0" cy="472.4" r="1.5"/><circle cx="421.5" cy="475.4" r="1.5"/><circle cx="404.7" cy="478.8" r="1.5"/><circle cx="424.3" cy="472.6" r="1.5"/><circle cx="415.5" cy="476.1" r="1.5"/><circle cx="415.5" cy="473.9" r="1.5"/><circle cx="419.9" cy="474.4" r="1.5"/><circle cx="405.5" cy="478.3" r="1.5"/><circle cx="405.8" cy="478.7" r="1.5"/><circle cx="412.6" cy="478.3" r="1.5"/><circle cx="424.0" cy="473.3" r="1.5"/><circle cx="404.0" cy="478.5" r="1.5"/><circle cx="417.3" cy="474.3" r="1.5"/><circle cx="421.3" cy="474.3" r="1.5"/><circle cx="416.0" cy="476.6" r="1.5"/><circle cx="408.5" cy="477.9" r="1.5"/><circle cx="414.7" cy="475.8" r="1.5"/><circle cx="418.0" cy="440.0" r="1.5"/><circle cx="423.0" cy="447.0" r="1.5"/><circle cx="442.0" cy="455.0" r="1.5"/><circle cx="420.0" cy="463.0" r="1.5"/><circle cx="430.0" cy="471.0" r="1.5"/><circle cx="421.5" cy="477.0" r="1.5"/><circle cx="338.0" cy="471.5" r="1.5"/><circle cx="367.0" cy="473.0" r="1.5"/><circle cx="371.0" cy="461.0" r="1.5"/><circle cx="374.0" cy="457.5" r="1.5"/><circle cx="427.0" cy="473.0" r="1.5"/><circle cx="428.0" cy="477.0" r="1.5"/></g>
<path d="M103.2,509.7V555.3M118.4,509.7V555.3M133.5,509.7V555.3M88,525.6H148.7M88,540.8H148.7" stroke="#c8c8c8" fill="none" stroke-width="0.9"/>
<rect x="88.4" y="510.09999999999997" width="59.89999999999999" height="44.79999999999997" fill="none" stroke="#d8d8d8" stroke-width="0.8"/>
<path d="M89,542 L115,548" stroke="#701010" fill="none" stroke-width="1"/>
<path d="M117,555 Q118,540 126,531 L146.6,514.7" stroke="#f0b078" fill="none" stroke-width="3.2" stroke-linecap="round"/>
<path d="M125,535 Q135,534 147,539" stroke="#f0d020" fill="none" stroke-width="2.8"/>
<path d="M127,537 Q140,537 146,541" stroke="#e0c020" fill="none" stroke-width="1"/>
<g fill="none" stroke="#e0d040" stroke-width="0.6"><circle cx="116.0" cy="536.0" r="1.1"/><circle cx="121.0" cy="533.0" r="1.1"/><circle cx="130.0" cy="536.0" r="1.1"/><circle cx="140.0" cy="538.0" r="1.1"/></g>
<line x1="215.3" y1="510" x2="215.3" y2="555" stroke="#d0d040" stroke-width="0.8" stroke-dasharray="1,1.5"/>
<line x1="319.2" y1="510" x2="319.2" y2="555" stroke="#d0d040" stroke-width="0.8" stroke-dasharray="1,1.5"/>
<g fill="none" stroke="#e8e040" stroke-width="0.9"><circle cx="280.8" cy="530.6" r="1.7"/><circle cx="314.0" cy="532.4" r="1.7"/><circle cx="292.9" cy="532.9" r="1.7"/><circle cx="264.4" cy="528.1" r="1.7"/><circle cx="314.1" cy="533.3" r="1.7"/><circle cx="227.8" cy="519.8" r="1.7"/><circle cx="264.8" cy="528.4" r="1.7"/><circle cx="275.7" cy="532.2" r="1.7"/><circle cx="217.4" cy="521.7" r="1.7"/><circle cx="311.3" cy="536.6" r="1.7"/><circle cx="295.6" cy="534.6" r="1.7"/><circle cx="230.4" cy="526.0" r="1.7"/><circle cx="280.2" cy="530.7" r="1.7"/><circle cx="306.6" cy="534.6" r="1.7"/><circle cx="237.8" cy="525.5" r="1.7"/><circle cx="306.7" cy="539.5" r="1.7"/><circle cx="246.1" cy="527.8" r="1.7"/><circle cx="286.5" cy="531.0" r="1.7"/><circle cx="237.3" cy="526.9" r="1.7"/><circle cx="316.5" cy="535.0" r="1.7"/><circle cx="308.9" cy="534.4" r="1.7"/><circle cx="233.3" cy="525.4" r="1.7"/><circle cx="231.2" cy="524.8" r="1.7"/><circle cx="278.7" cy="531.0" r="1.7"/><circle cx="216.4" cy="520.5" r="1.7"/><circle cx="248.2" cy="524.5" r="1.7"/><circle cx="301.1" cy="532.2" r="1.7"/><circle cx="266.0" cy="528.8" r="1.7"/><circle cx="289.3" cy="536.6" r="1.7"/><circle cx="218.4" cy="523.3" r="1.7"/><circle cx="294.0" cy="532.9" r="1.7"/><circle cx="297.9" cy="533.0" r="1.7"/><circle cx="254.1" cy="526.6" r="1.7"/><circle cx="220.9" cy="521.8" r="1.7"/><circle cx="234.8" cy="525.1" r="1.7"/><circle cx="294.6" cy="532.4" r="1.7"/><circle cx="312.7" cy="537.0" r="1.7"/><circle cx="252.9" cy="526.0" r="1.7"/><circle cx="270.6" cy="529.4" r="1.7"/><circle cx="293.8" cy="531.8" r="1.7"/><circle cx="298.9" cy="533.7" r="1.7"/><circle cx="314.4" cy="535.3" r="1.7"/><circle cx="225.5" cy="521.3" r="1.7"/><circle cx="311.5" cy="537.3" r="1.7"/><circle cx="251.4" cy="528.4" r="1.7"/><circle cx="248.5" cy="524.9" r="1.7"/><circle cx="248.9" cy="526.4" r="1.7"/><circle cx="231.5" cy="524.1" r="1.7"/><circle cx="287.7" cy="532.8" r="1.7"/><circle cx="221.0" cy="521.9" r="1.7"/><circle cx="318.6" cy="534.5" r="1.7"/><circle cx="240.7" cy="524.4" r="1.7"/><circle cx="277.8" cy="531.2" r="1.7"/><circle cx="259.9" cy="525.9" r="1.7"/><circle cx="221.8" cy="522.5" r="1.7"/><circle cx="267.3" cy="528.5" r="1.7"/><circle cx="303.2" cy="536.0" r="1.7"/><circle cx="314.8" cy="537.9" r="1.7"/><circle cx="281.6" cy="531.0" r="1.7"/><circle cx="261.2" cy="527.0" r="1.7"/><circle cx="231.5" cy="524.3" r="1.7"/><circle cx="263.1" cy="526.9" r="1.7"/><circle cx="319.9" cy="539.4" r="1.7"/><circle cx="263.2" cy="524.2" r="1.7"/><circle cx="266.8" cy="528.4" r="1.7"/><circle cx="246.3" cy="523.6" r="1.7"/><circle cx="258.0" cy="528.4" r="1.7"/><circle cx="318.8" cy="537.7" r="1.7"/><circle cx="315.8" cy="534.4" r="1.7"/><circle cx="251.2" cy="524.9" r="1.7"/><circle cx="225.3" cy="522.1" r="1.7"/><circle cx="306.2" cy="537.6" r="1.7"/><circle cx="253.6" cy="527.4" r="1.7"/><circle cx="288.2" cy="528.8" r="1.7"/><circle cx="285.1" cy="531.5" r="1.7"/><circle cx="289.3" cy="530.3" r="1.7"/><circle cx="245.2" cy="522.4" r="1.7"/><circle cx="287.9" cy="532.0" r="1.7"/><circle cx="246.6" cy="528.2" r="1.7"/><circle cx="276.4" cy="529.2" r="1.7"/><circle cx="217.2" cy="520.1" r="1.7"/><circle cx="285.9" cy="531.1" r="1.7"/><circle cx="264.1" cy="529.3" r="1.7"/><circle cx="299.0" cy="531.0" r="1.7"/><circle cx="252.2" cy="524.7" r="1.7"/><circle cx="302.1" cy="531.6" r="1.7"/><circle cx="252.4" cy="528.6" r="1.7"/><circle cx="287.6" cy="528.7" r="1.7"/><circle cx="317.5" cy="538.2" r="1.7"/><circle cx="271.1" cy="528.7" r="1.7"/><circle cx="233.3" cy="525.9" r="1.7"/><circle cx="265.6" cy="524.9" r="1.7"/><circle cx="287.9" cy="531.2" r="1.7"/><circle cx="233.9" cy="521.0" r="1.7"/><circle cx="297.2" cy="530.8" r="1.7"/><circle cx="259.8" cy="526.3" r="1.7"/><circle cx="280.9" cy="531.1" r="1.7"/><circle cx="290.9" cy="529.7" r="1.7"/><circle cx="218.9" cy="522.7" r="1.7"/><circle cx="283.6" cy="532.8" r="1.7"/><circle cx="238.8" cy="523.6" r="1.7"/><circle cx="220.4" cy="519.5" r="1.7"/><circle cx="265.0" cy="528.5" r="1.7"/><circle cx="229.9" cy="523.8" r="1.7"/><circle cx="249.0" cy="526.5" r="1.7"/><circle cx="219.7" cy="522.8" r="1.7"/><circle cx="264.4" cy="526.5" r="1.7"/><circle cx="277.4" cy="531.9" r="1.7"/><circle cx="240.7" cy="524.9" r="1.7"/><circle cx="258.2" cy="527.4" r="1.7"/><circle cx="245.0" cy="524.7" r="1.7"/><circle cx="302.5" cy="534.4" r="1.7"/><circle cx="254.9" cy="529.3" r="1.7"/><circle cx="225.9" cy="523.2" r="1.7"/><circle cx="272.7" cy="528.3" r="1.7"/><circle cx="315.7" cy="537.9" r="1.7"/><circle cx="301.1" cy="530.8" r="1.7"/><circle cx="282.8" cy="532.6" r="1.7"/><circle cx="254.4" cy="528.4" r="1.7"/><circle cx="274.6" cy="531.7" r="1.7"/><circle cx="230.4" cy="522.8" r="1.7"/><circle cx="225.5" cy="519.1" r="1.7"/><circle cx="229.5" cy="517.0" r="1.7"/><circle cx="218.5" cy="520.4" r="1.7"/><circle cx="225.6" cy="517.8" r="1.7"/><circle cx="225.8" cy="522.3" r="1.7"/><circle cx="222.3" cy="519.6" r="1.7"/><circle cx="220.2" cy="518.7" r="1.7"/><circle cx="230.6" cy="519.3" r="1.7"/><circle cx="230.5" cy="522.5" r="1.7"/><circle cx="225.3" cy="518.6" r="1.7"/><circle cx="230.7" cy="520.0" r="1.7"/><circle cx="222.8" cy="518.9" r="1.7"/><circle cx="230.8" cy="520.0" r="1.7"/><circle cx="221.0" cy="519.9" r="1.7"/><circle cx="227.5" cy="534.3" r="1.7"/><circle cx="269.0" cy="538.5" r="1.7"/><circle cx="253.5" cy="554.5" r="1.7"/><circle cx="222.0" cy="514.0" r="1.7"/><circle cx="233.0" cy="516.0" r="1.7"/></g>
<path d="M215.3,521.2 L319.9,536.5" stroke="#fbfbd8" fill="none" stroke-width="2"/>
<path d="M350.2,520.5 L441.1,551.8" stroke="#e0e0e0" fill="none" stroke-width="0.8"/>
<line x1="333" y1="554.6" x2="447" y2="554.6" stroke="#e0e0e0" stroke-width="0.8" stroke-dasharray="1,1.5"/>
<g fill="#f0f020" stroke="#d8d818" stroke-width="0.5"><circle cx="340.8" cy="522.4" r="1.5"/><circle cx="339.1" cy="534.7" r="1.5"/><circle cx="343.4" cy="524.4" r="1.5"/><circle cx="338.0" cy="536.0" r="1.5"/><circle cx="342.5" cy="535.7" r="1.5"/><circle cx="342.6" cy="530.5" r="1.5"/><circle cx="346.8" cy="538.8" r="1.5"/><circle cx="344.1" cy="525.1" r="1.5"/><circle cx="350.9" cy="525.1" r="1.5"/><circle cx="345.2" cy="544.8" r="1.5"/><circle cx="342.4" cy="550.1" r="1.5"/><circle cx="341.9" cy="528.8" r="1.5"/><circle cx="347.3" cy="535.4" r="1.5"/><circle cx="346.6" cy="530.4" r="1.5"/><circle cx="342.7" cy="522.0" r="1.5"/><circle cx="341.8" cy="552.2" r="1.5"/><circle cx="340.2" cy="533.7" r="1.5"/><circle cx="341.7" cy="534.9" r="1.5"/><circle cx="347.2" cy="523.3" r="1.5"/><circle cx="343.4" cy="525.2" r="1.5"/><circle cx="344.6" cy="546.4" r="1.5"/><circle cx="349.6" cy="550.9" r="1.5"/><circle cx="343.1" cy="545.4" r="1.5"/><circle cx="339.4" cy="544.5" r="1.5"/><circle cx="337.3" cy="520.8" r="1.5"/><circle cx="342.9" cy="523.8" r="1.5"/><circle cx="345.0" cy="552.0" r="1.5"/><circle cx="340.6" cy="530.2" r="1.5"/><circle cx="336.1" cy="533.6" r="1.5"/><circle cx="347.9" cy="531.1" r="1.5"/><circle cx="345.4" cy="517.0" r="1.5"/><circle cx="345.4" cy="554.7" r="1.5"/><circle cx="339.2" cy="535.3" r="1.5"/><circle cx="343.0" cy="545.2" r="1.5"/><circle cx="339.6" cy="524.7" r="1.5"/><circle cx="340.6" cy="540.3" r="1.5"/><circle cx="343.3" cy="523.0" r="1.5"/><circle cx="345.1" cy="552.2" r="1.5"/><circle cx="340.5" cy="529.5" r="1.5"/><circle cx="340.8" cy="520.0" r="1.5"/><circle cx="343.8" cy="518.6" r="1.5"/><circle cx="338.2" cy="530.6" r="1.5"/><circle cx="340.2" cy="542.7" r="1.5"/><circle cx="338.1" cy="553.4" r="1.5"/><circle cx="349.0" cy="531.9" r="1.5"/><circle cx="342.2" cy="539.0" r="1.5"/><circle cx="340.4" cy="550.4" r="1.5"/><circle cx="342.4" cy="525.6" r="1.5"/><circle cx="343.5" cy="550.2" r="1.5"/><circle cx="343.7" cy="547.4" r="1.5"/><circle cx="337.9" cy="546.2" r="1.5"/><circle cx="342.5" cy="518.0" r="1.5"/><circle cx="341.6" cy="526.1" r="1.5"/><circle cx="344.8" cy="522.7" r="1.5"/><circle cx="339.1" cy="518.7" r="1.5"/><circle cx="347.8" cy="554.4" r="1.5"/><circle cx="340.8" cy="545.1" r="1.5"/><circle cx="343.3" cy="553.4" r="1.5"/><circle cx="342.5" cy="536.5" r="1.5"/><circle cx="341.6" cy="524.3" r="1.5"/><circle cx="344.4" cy="548.7" r="1.5"/><circle cx="337.5" cy="539.5" r="1.5"/><circle cx="338.0" cy="532.6" r="1.5"/><circle cx="339.8" cy="528.0" r="1.5"/><circle cx="341.8" cy="536.8" r="1.5"/><circle cx="346.3" cy="516.4" r="1.5"/><circle cx="343.3" cy="542.7" r="1.5"/><circle cx="342.5" cy="539.2" r="1.5"/><circle cx="344.7" cy="541.1" r="1.5"/><circle cx="339.5" cy="526.0" r="1.5"/><circle cx="347.9" cy="531.8" r="1.5"/><circle cx="340.6" cy="521.2" r="1.5"/><circle cx="342.5" cy="519.7" r="1.5"/><circle cx="342.8" cy="533.4" r="1.5"/><circle cx="344.6" cy="521.5" r="1.5"/><circle cx="339.3" cy="520.9" r="1.5"/><circle cx="341.2" cy="537.0" r="1.5"/><circle cx="344.9" cy="524.6" r="1.5"/><circle cx="343.1" cy="522.5" r="1.5"/><circle cx="345.1" cy="543.7" r="1.5"/><circle cx="346.5" cy="537.5" r="1.5"/><circle cx="344.1" cy="550.1" r="1.5"/><circle cx="342.9" cy="546.2" r="1.5"/><circle cx="342.2" cy="534.1" r="1.5"/><circle cx="342.1" cy="518.5" r="1.5"/><circle cx="341.2" cy="543.7" r="1.5"/><circle cx="341.5" cy="525.9" r="1.5"/><circle cx="339.8" cy="517.6" r="1.5"/><circle cx="340.3" cy="531.2" r="1.5"/><circle cx="347.5" cy="527.5" r="1.5"/><circle cx="336.5" cy="535.6" r="1.5"/><circle cx="340.1" cy="519.8" r="1.5"/><circle cx="338.4" cy="539.4" r="1.5"/><circle cx="342.8" cy="553.7" r="1.5"/><circle cx="341.3" cy="528.1" r="1.5"/><circle cx="339.6" cy="537.9" r="1.5"/><circle cx="344.8" cy="518.5" r="1.5"/><circle cx="335.8" cy="529.9" r="1.5"/><circle cx="343.5" cy="528.4" r="1.5"/><circle cx="342.0" cy="519.0" r="1.5"/><circle cx="343.7" cy="518.9" r="1.5"/><circle cx="338.4" cy="533.5" r="1.5"/><circle cx="346.4" cy="540.2" r="1.5"/><circle cx="342.9" cy="533.3" r="1.5"/><circle cx="340.5" cy="536.2" r="1.5"/><circle cx="343.9" cy="524.8" r="1.5"/><circle cx="340.2" cy="517.9" r="1.5"/><circle cx="343.5" cy="543.5" r="1.5"/><circle cx="342.4" cy="547.9" r="1.5"/><circle cx="339.4" cy="525.2" r="1.5"/><circle cx="338.7" cy="531.0" r="1.5"/><circle cx="343.4" cy="553.6" r="1.5"/><circle cx="339.0" cy="519.3" r="1.5"/><circle cx="343.2" cy="544.0" r="1.5"/><circle cx="343.6" cy="550.7" r="1.5"/><circle cx="339.2" cy="545.6" r="1.5"/><circle cx="345.3" cy="542.1" r="1.5"/><circle cx="339.6" cy="542.6" r="1.5"/><circle cx="344.4" cy="525.6" r="1.5"/><circle cx="341.4" cy="540.0" r="1.5"/><circle cx="350.5" cy="548.2" r="1.5"/><circle cx="340.2" cy="516.2" r="1.5"/><circle cx="341.3" cy="528.2" r="1.5"/><circle cx="344.5" cy="521.7" r="1.5"/><circle cx="344.5" cy="537.6" r="1.5"/><circle cx="344.1" cy="552.8" r="1.5"/><circle cx="341.6" cy="545.0" r="1.5"/><circle cx="343.3" cy="553.3" r="1.5"/><circle cx="343.4" cy="543.5" r="1.5"/><circle cx="344.9" cy="541.0" r="1.5"/><circle cx="342.3" cy="542.6" r="1.5"/><circle cx="348.7" cy="528.6" r="1.5"/><circle cx="343.1" cy="525.9" r="1.5"/><circle cx="341.5" cy="542.6" r="1.5"/><circle cx="340.5" cy="523.8" r="1.5"/><circle cx="341.2" cy="530.8" r="1.5"/><circle cx="340.3" cy="552.7" r="1.5"/><circle cx="343.2" cy="540.1" r="1.5"/><circle cx="343.4" cy="526.9" r="1.5"/><circle cx="344.5" cy="526.6" r="1.5"/></g>
<path d="M346,537 L347.5,545" stroke="#30c030" fill="none" stroke-width="1.6"/>
<path d="M345.8,511 L345.8,522" stroke="#b8c040" fill="none" stroke-width="1"/>
<circle cx="337.2" cy="514.4" r="3.6" fill="#f01010"/><circle cx="441.1" cy="551.8" r="4.2" fill="#f01010"/>
<rect x="348.5" y="518.5" width="5" height="5" fill="none" stroke="#e8e8e8" stroke-width="0.8"/>
<rect x="690.6" y="97.2" width="145.4" height="214" rx="2" fill="#7c86e2"/>
<rect x="692.4" y="98.7" width="141.8" height="16" fill="#1a5ce0"/>
<rect x="692.4" y="114.6" width="141.8" height="194.6" fill="#fff"/>
<line x1="692.4" y1="114.9" x2="834.2" y2="114.9" stroke="#6a88e0" stroke-width="0.8"/>
<text x="703.5" y="109.7" font-size="8.6" fill="#fff" font-weight="bold" textLength="120" lengthAdjust="spacingAndGlyphs" xml:space="preserve">SOUTH -P &quot;F 9   -   Fluid is Gas</text>
<text x="763.4" y="123.4" font-size="8.2" fill="#111" textLength="65.3" lengthAdjust="spacingAndGlyphs" text-anchor="middle">Tmin = 1.3728E+5 hr</text>
<text x="763.4" y="132" font-size="8.2" fill="#111" textLength="71.6" lengthAdjust="spacingAndGlyphs" text-anchor="middle">Tmax = 2.01624E+5 hr</text>
<text x="763.4" y="149.8" font-size="8.2" fill="#111" textLength="45" lengthAdjust="spacingAndGlyphs" text-anchor="middle">Well = Vertical</text>
<text x="763.4" y="158.4" font-size="8.2" fill="#111" textLength="83.3" lengthAdjust="spacingAndGlyphs" text-anchor="middle">Reservoir = Homogeneous</text>
<text x="763.4" y="167" font-size="8.2" fill="#111" textLength="56.7" lengthAdjust="spacingAndGlyphs" text-anchor="middle">Boundary = Circle</text>
<text x="763.4" y="184.8" font-size="8.2" fill="#111" textLength="41" lengthAdjust="spacingAndGlyphs" text-anchor="middle">Pi = 340 psia</text>
<text x="763.4" y="193.4" font-size="8.2" fill="#111" textLength="50.8" lengthAdjust="spacingAndGlyphs" text-anchor="middle">k.h = 76.4 md.ft</text>
<text x="763.4" y="202" font-size="8.2" fill="#111" textLength="39" lengthAdjust="spacingAndGlyphs" text-anchor="middle">k = 2.55 md</text>
<text x="763.4" y="210.6" font-size="8.2" fill="#111" textLength="43.8" lengthAdjust="spacingAndGlyphs" text-anchor="middle">Re = 48500 ft</text>
<text x="763.4" y="219.2" font-size="8.2" fill="#111" textLength="39" lengthAdjust="spacingAndGlyphs" text-anchor="middle">Skin = -5.29</text>
<text x="763.4" y="227.8" font-size="8.2" fill="#111" textLength="56.7" lengthAdjust="spacingAndGlyphs" text-anchor="middle">STGIIP = 410 bscf</text>
<text x="763.4" y="236.4" font-size="8.2" fill="#111" textLength="55" lengthAdjust="spacingAndGlyphs" text-anchor="middle">STGIP = 410 bscf</text>
<text x="763.4" y="263.2" font-size="8.2" fill="#111" textLength="79.4" lengthAdjust="spacingAndGlyphs" text-anchor="middle">Default values are used!</text></svg></body></html>
